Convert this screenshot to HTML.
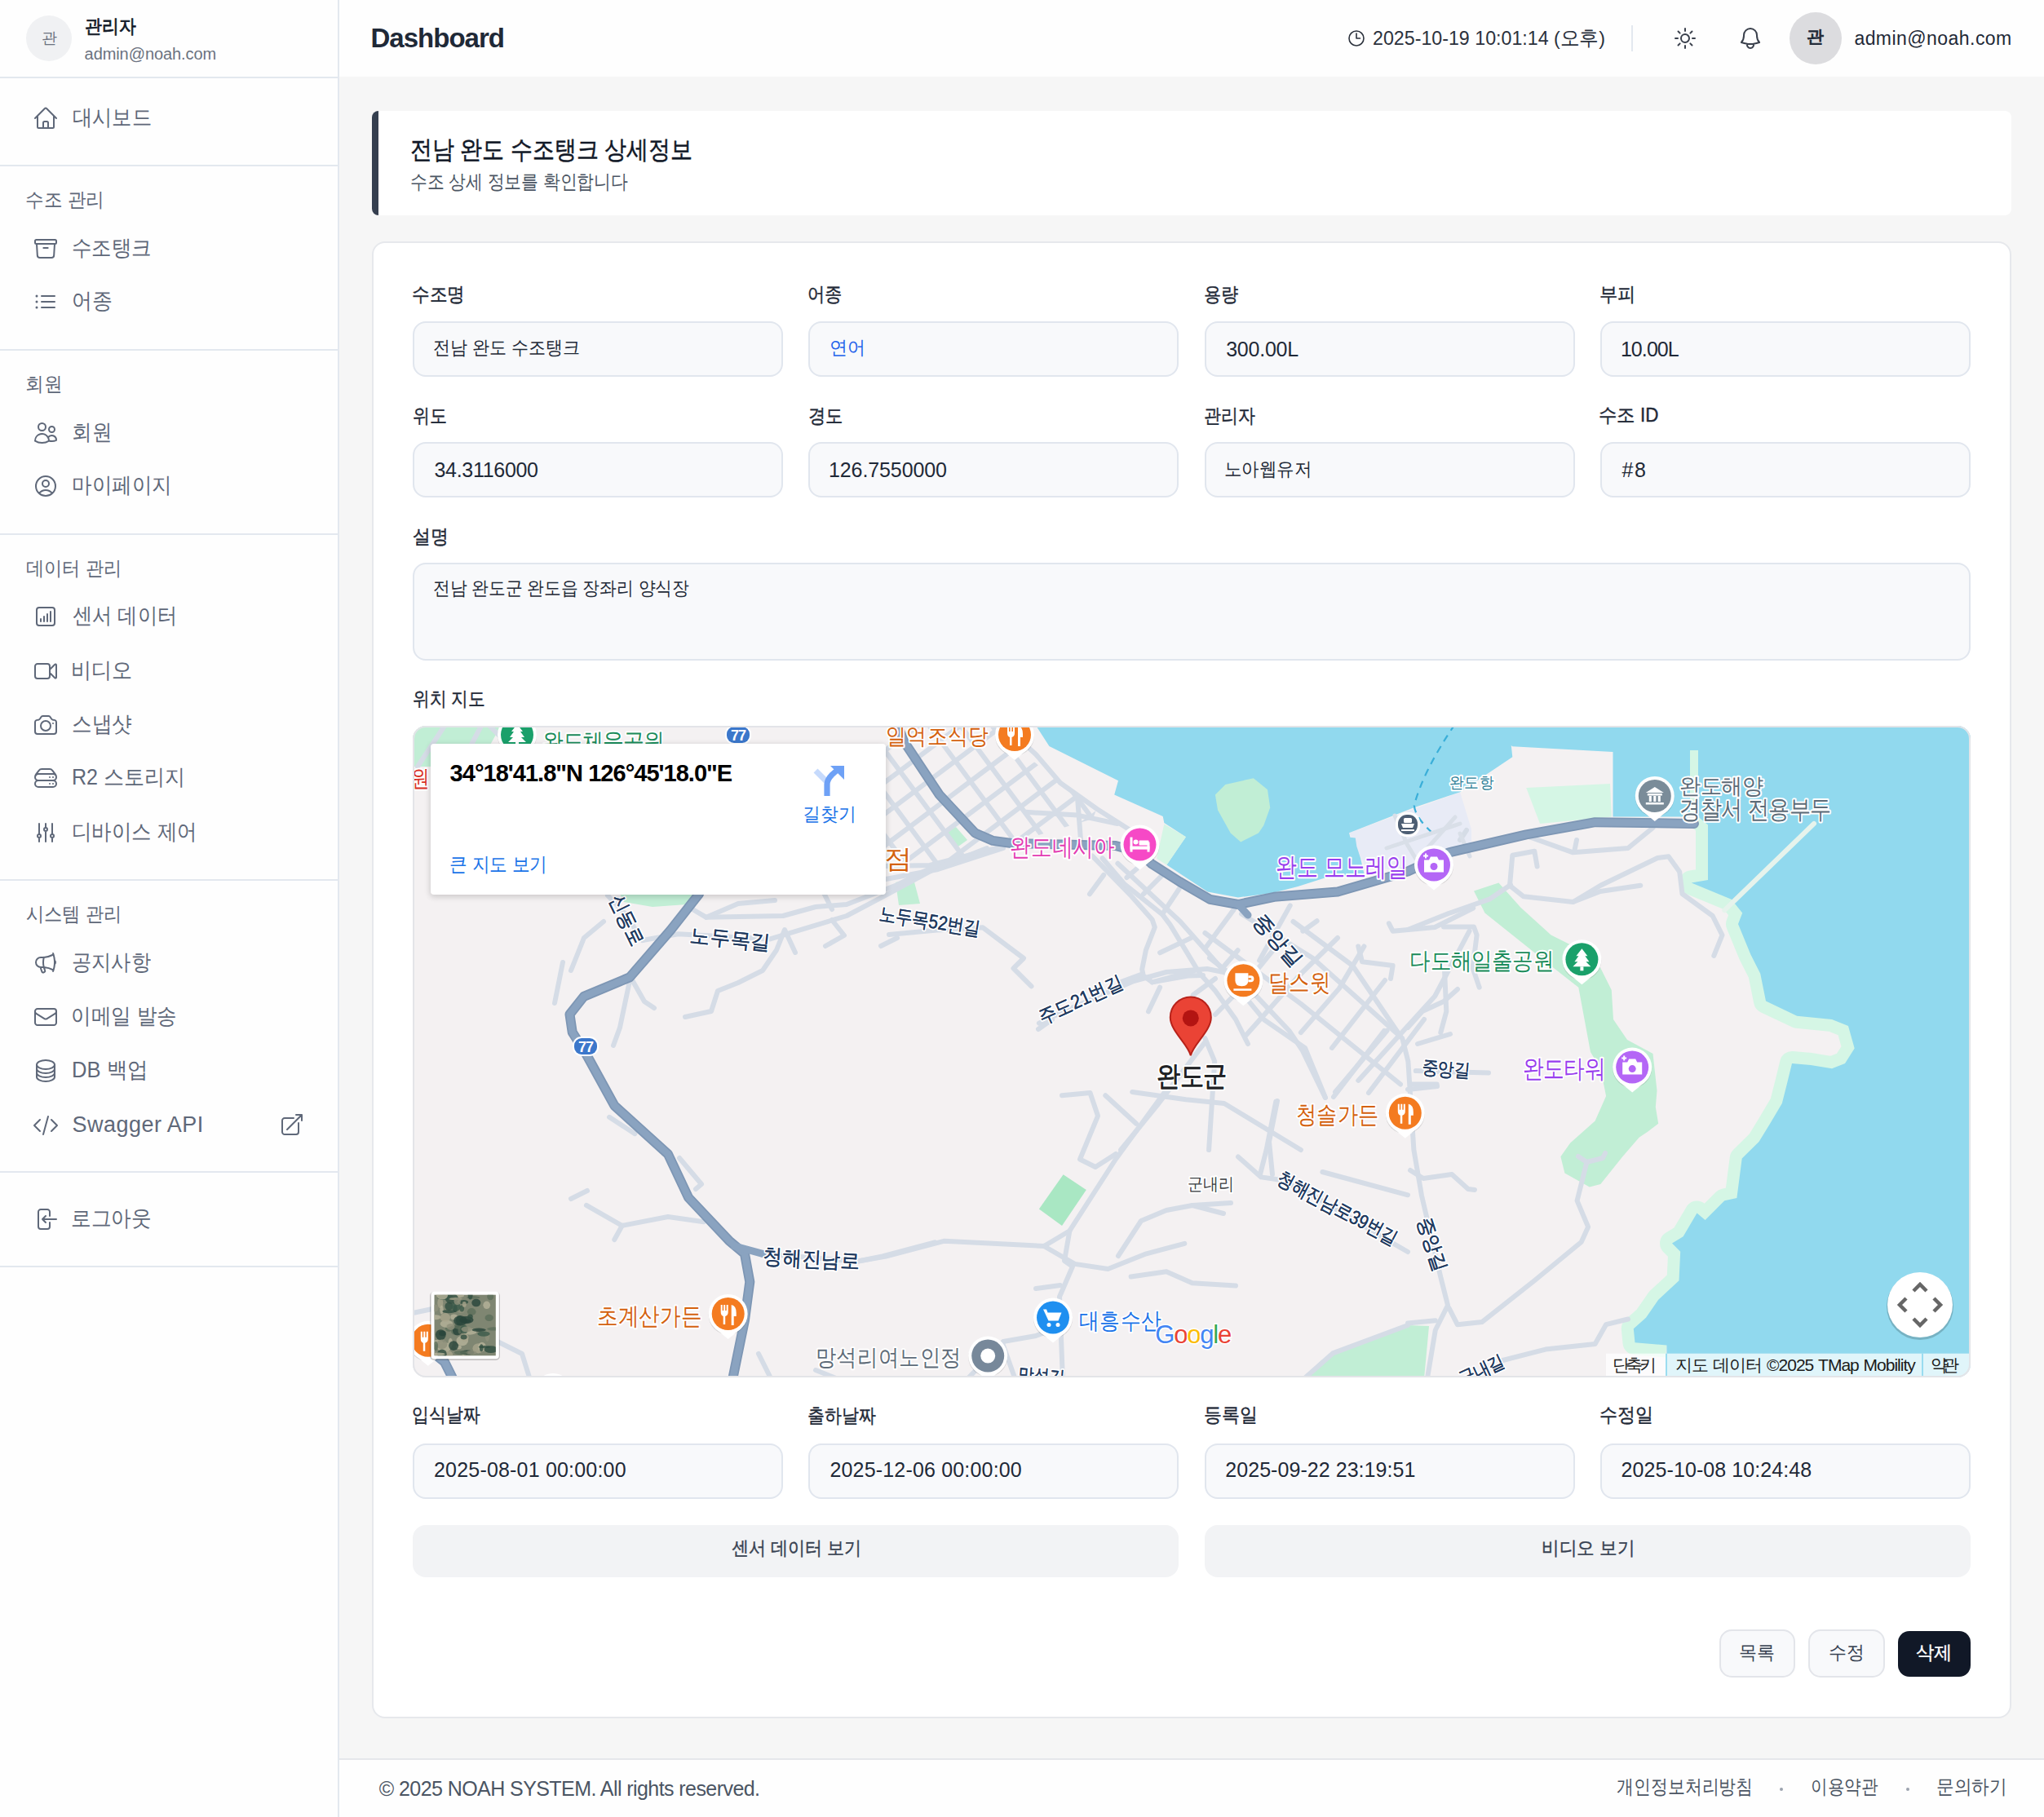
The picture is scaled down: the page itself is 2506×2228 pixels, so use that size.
<!DOCTYPE html>
<html><head><meta charset="utf-8">
<style>
*{box-sizing:border-box;margin:0;padding:0}
html,body{width:2506px;height:2228px;overflow:hidden;background:#f6f6f6;font-family:"Liberation Sans",sans-serif}
.box{position:absolute}
.ic{position:absolute;overflow:visible}
.t{position:absolute;white-space:nowrap;line-height:1}
</style></head><body>
<div class="box" style="left:0;top:0;width:414px;height:2228px;background:#fefefe"></div>
<div class="box" style="left:414px;top:0;width:2px;height:2228px;background:#e3e8ef"></div>
<div class="box" style="left:0;top:94px;width:414px;height:2px;background:#e3e8ef"></div>
<div class="box" style="left:0;top:202px;width:414px;height:2px;background:#e3e8ef"></div>
<div class="box" style="left:0;top:428px;width:414px;height:2px;background:#e3e8ef"></div>
<div class="box" style="left:0;top:654px;width:414px;height:2px;background:#e3e8ef"></div>
<div class="box" style="left:0;top:1078px;width:414px;height:2px;background:#e3e8ef"></div>
<div class="box" style="left:0;top:1436px;width:414px;height:2px;background:#e3e8ef"></div>
<div class="box" style="left:0;top:1552px;width:414px;height:2px;background:#e3e8ef"></div>
<div class="box" style="left:32px;top:19px;width:56px;height:56px;border-radius:50%;background:#f0f1f3"></div>
<svg class="ic" style="left:40px;top:129px" width="32" height="32" viewBox="0 0 24 24" fill="none" stroke="#5f6879" stroke-width="1.5" stroke-linecap="round" stroke-linejoin="round"><path d="M2.25 12l8.954-8.955c.44-.439 1.152-.439 1.591 0L21.75 12M4.5 9.75v10.125c0 .621.504 1.125 1.125 1.125H9.75v-4.875c0-.621.504-1.125 1.125-1.125h2.25c.621 0 1.125.504 1.125 1.125V21h4.125c.621 0 1.125-.504 1.125-1.125V9.75M8.25 21h8.25"/></svg>
<svg class="ic" style="left:40px;top:289.4px" width="32" height="32" viewBox="0 0 24 24" fill="none" stroke="#5f6879" stroke-width="1.5" stroke-linecap="round" stroke-linejoin="round"><path d="M20.25 7.5l-.625 10.632a2.25 2.25 0 01-2.247 2.118H6.622a2.25 2.25 0 01-2.247-2.118L3.75 7.5M10 11.25h4M3.375 7.5h17.25c.621 0 1.125-.504 1.125-1.125v-1.5c0-.621-.504-1.125-1.125-1.125H3.375c-.621 0-1.125.504-1.125 1.125v1.5c0 .621.504 1.125 1.125 1.125z"/></svg>
<svg class="ic" style="left:40px;top:354px" width="32" height="32" viewBox="0 0 24 24" fill="none" stroke="#5f6879" stroke-width="1.5" stroke-linecap="round" stroke-linejoin="round"><path d="M8.25 6.75h12M8.25 12h12m-12 5.25h12M3.75 6.75h.007v.008H3.75V6.75zm.375 0a.375.375 0 11-.75 0 .375.375 0 01.75 0zM3.75 12h.007v.008H3.75V12zm.375 0a.375.375 0 11-.75 0 .375.375 0 01.75 0zm-.375 5.25h.007v.008H3.75v-.008zm.375 0a.375.375 0 11-.75 0 .375.375 0 01.75 0z"/></svg>
<svg class="ic" style="left:40px;top:514.7px" width="32" height="32" viewBox="0 0 24 24" fill="none" stroke="#5f6879" stroke-width="1.5" stroke-linecap="round" stroke-linejoin="round"><path d="M15 19.128a9.38 9.38 0 002.625.372 9.337 9.337 0 004.121-.952 4.125 4.125 0 00-7.533-2.493M15 19.128v-.003c0-1.113-.285-2.16-.786-3.07M15 19.128v.106A12.318 12.318 0 018.624 21c-2.331 0-4.512-.645-6.374-1.766l-.001-.109a6.375 6.375 0 0111.964-3.07M12 6.375a3.375 3.375 0 11-6.75 0 3.375 3.375 0 016.75 0zm8.25 2.25a2.625 2.625 0 11-5.25 0 2.625 2.625 0 015.25 0z"/></svg>
<svg class="ic" style="left:40px;top:580.2px" width="32" height="32" viewBox="0 0 24 24" fill="none" stroke="#5f6879" stroke-width="1.5" stroke-linecap="round" stroke-linejoin="round"><path d="M17.982 18.725A7.488 7.488 0 0012 15.75a7.488 7.488 0 00-5.982 2.975m11.963 0a9 9 0 10-11.963 0m11.963 0A8.966 8.966 0 0112 21a8.966 8.966 0 01-5.982-2.275M15 9.75a3 3 0 11-6 0 3 3 0 016 0z"/></svg>
<svg class="ic" style="left:40px;top:740px" width="32" height="32" viewBox="0 0 24 24" fill="none" stroke="#5f6879" stroke-width="1.5" stroke-linecap="round" stroke-linejoin="round"><path d="M7.5 14.25v2.25m3-4.5v4.5m3-6.75v6.75m3-9v9M6 20.25h12A2.25 2.25 0 0020.25 18V6A2.25 2.25 0 0018 3.75H6A2.25 2.25 0 003.75 6v12A2.25 2.25 0 006 20.25z"/></svg>
<svg class="ic" style="left:40px;top:806.7px" width="32" height="32" viewBox="0 0 24 24" fill="none" stroke="#5f6879" stroke-width="1.5" stroke-linecap="round" stroke-linejoin="round"><path d="M15.75 10.5l4.72-4.72a.75.75 0 011.28.53v11.38a.75.75 0 01-1.28.53l-4.72-4.72M4.5 18.75h9a2.25 2.25 0 002.25-2.25v-9a2.25 2.25 0 00-2.25-2.25h-9A2.25 2.25 0 002.25 7.5v9a2.25 2.25 0 002.25 2.25z"/></svg>
<svg class="ic" style="left:40px;top:873px" width="32" height="32" viewBox="0 0 24 24" fill="none" stroke="#5f6879" stroke-width="1.5" stroke-linecap="round" stroke-linejoin="round"><path d="M6.827 6.175A2.31 2.31 0 015.186 7.23c-.38.054-.757.112-1.134.175C2.999 7.58 2.25 8.507 2.25 9.574V18a2.25 2.25 0 002.25 2.25h15A2.25 2.25 0 0021.75 18V9.574c0-1.067-.75-1.994-1.802-2.169a47.865 47.865 0 00-1.134-.175 2.31 2.31 0 01-1.64-1.055l-.822-1.316a2.192 2.192 0 00-1.736-1.039 48.774 48.774 0 00-5.232 0 2.192 2.192 0 00-1.736 1.039l-.821 1.316zM16.5 12.75a4.5 4.5 0 11-9 0 4.5 4.5 0 019 0zM18.75 10.5h.008v.008h-.008V10.5z"/></svg>
<svg class="ic" style="left:40px;top:938.2px" width="32" height="32" viewBox="0 0 24 24" fill="none" stroke="#5f6879" stroke-width="1.5" stroke-linecap="round" stroke-linejoin="round"><path d="M5.25 14.25h13.5m-13.5 0a3 3 0 01-3-3m3 3a3 3 0 100 6h13.5a3 3 0 100-6m-16.5-3a3 3 0 013-3h13.5a3 3 0 013 3m-19.5 0a4.5 4.5 0 01.9-2.7L5.737 5.1a3.375 3.375 0 012.7-1.35h7.126c1.062 0 2.062.5 2.7 1.35l2.587 3.45a4.5 4.5 0 01.9 2.7m0 0a3 3 0 01-3 3m0 3h.008v.008h-.008v-.008zm0-6h.008v.008h-.008v-.008zm-3 6h.008v.008h-.008v-.008zm0-6h.008v.008h-.008v-.008z"/></svg>
<svg class="ic" style="left:40px;top:1004.6px" width="32" height="32" viewBox="0 0 24 24" fill="none" stroke="#5f6879" stroke-width="1.5" stroke-linecap="round" stroke-linejoin="round"><path d="M6 13.5V3.75m0 9.75a1.5 1.5 0 010 3m0-3a1.5 1.5 0 000 3m0 3.75V16.5m12-3V3.75m0 9.75a1.5 1.5 0 010 3m0-3a1.5 1.5 0 000 3m0 3.75V16.5m-6-9V3.75m0 3.75a1.5 1.5 0 010 3m0-3a1.5 1.5 0 000 3m0 9.75V10.5"/></svg>
<svg class="ic" style="left:40px;top:1164.8px" width="32" height="32" viewBox="0 0 24 24" fill="none" stroke="#5f6879" stroke-width="1.5" stroke-linecap="round" stroke-linejoin="round"><path d="M10.34 15.84c-.688-.06-1.386-.09-2.09-.09H7.5a4.5 4.5 0 110-9h.75c.704 0 1.402-.03 2.09-.09m0 9.18c.253.962.584 1.892.985 2.783.247.55.06 1.21-.463 1.511l-.657.38c-.551.318-1.26.117-1.527-.461a20.845 20.845 0 01-1.44-4.282m3.102.069a18.03 18.03 0 01-.59-4.59c0-1.586.205-3.124.59-4.59m0 9.18a23.848 23.848 0 018.835 2.535M10.34 6.66a23.847 23.847 0 008.835-2.535m0 0A23.74 23.74 0 0018.795 3m.38 1.125a23.91 23.91 0 011.014 5.395m-1.014 8.855c-.118.38-.245.754-.38 1.125m.38-1.125a23.91 23.91 0 001.014-5.395m0-3.46c.495.413.811 1.035.811 1.73 0 .695-.316 1.317-.811 1.73m0-3.46a24.347 24.347 0 010 3.46"/></svg>
<svg class="ic" style="left:40px;top:1230.7px" width="32" height="32" viewBox="0 0 24 24" fill="none" stroke="#5f6879" stroke-width="1.5" stroke-linecap="round" stroke-linejoin="round"><path d="M21.75 6.75v10.5a2.25 2.25 0 01-2.25 2.25h-15a2.25 2.25 0 01-2.25-2.25V6.75m19.5 0A2.25 2.25 0 0019.5 4.5h-15a2.25 2.25 0 00-2.25 2.25m19.5 0v.243a2.25 2.25 0 01-1.07 1.916l-7.5 4.615a2.25 2.25 0 01-2.36 0L3.32 8.91a2.25 2.25 0 01-1.07-1.916V6.75"/></svg>
<svg class="ic" style="left:40px;top:1296.8px" width="32" height="32" viewBox="0 0 24 24" fill="none" stroke="#5f6879" stroke-width="1.5" stroke-linecap="round" stroke-linejoin="round"><path d="M20.25 6.375c0 2.278-3.694 4.125-8.25 4.125S3.75 8.653 3.75 6.375m16.5 0c0-2.278-3.694-4.125-8.25-4.125S3.75 4.097 3.75 6.375m16.5 0v11.25c0 2.278-3.694 4.125-8.25 4.125s-8.25-1.847-8.25-4.125V6.375m16.5 0v3.75m-16.5-3.75v3.75m16.5 0v3.75C20.25 16.153 16.556 18 12 18s-8.25-1.847-8.25-4.125v-3.75m16.5 0c0 2.278-3.694 4.125-8.25 4.125s-8.25-1.847-8.25-4.125"/></svg>
<svg class="ic" style="left:40px;top:1364px" width="32" height="32" viewBox="0 0 24 24" fill="none" stroke="#5f6879" stroke-width="1.5" stroke-linecap="round" stroke-linejoin="round"><path d="M17.25 6.75L22.5 12l-5.25 5.25m-10.5 0L1.5 12l5.25-5.25m7.5-3l-4.5 16.5"/></svg>
<svg class="ic" style="left:40px;top:1479px" width="32" height="32" viewBox="0 0 24 24" fill="none" stroke="#5f6879" stroke-width="1.5" stroke-linecap="round" stroke-linejoin="round"><path d="M15.75 9V5.25A2.25 2.25 0 0013.5 3h-6a2.25 2.25 0 00-2.25 2.25v13.5A2.25 2.25 0 007.5 21h6a2.25 2.25 0 002.25-2.25V15M12 9l-3 3m0 0l3 3m-3-3h12.75"/></svg>
<svg class="ic" style="left:342px;top:1363px" width="32" height="32" viewBox="0 0 24 24" fill="none" stroke="#5f6879" stroke-width="1.5" stroke-linecap="round" stroke-linejoin="round"><path d="M13.5 6H5.25A2.25 2.25 0 003 8.25v10.5A2.25 2.25 0 005.25 21h10.5A2.25 2.25 0 0018 18.75V10.5m-10.5 6L21 3m0 0h-5.25M21 3v5.25"/></svg>
<div class="box" style="left:416px;top:0;width:2090px;height:94px;background:#fefefe"></div>
<svg class="ic" style="left:1651px;top:35.3px" width="24" height="24" viewBox="0 0 24 24" fill="none" stroke="#2b313c" stroke-width="1.6" stroke-linecap="round" stroke-linejoin="round"><path d="M12 6v6h4.5m4.5 0a9 9 0 11-18 0 9 9 0 0118 0z"/></svg>
<div class="box" style="left:2000px;top:31px;width:2px;height:32px;background:#e3e8ef"></div>
<svg class="ic" style="left:2050px;top:31px" width="32" height="32" viewBox="0 0 24 24" fill="none" stroke="#3a404c" stroke-width="1.5" stroke-linecap="round" stroke-linejoin="round"><path d="M12 3v2.25m6.364.386l-1.591 1.591M21 12h-2.25m-.386 6.364l-1.591-1.591M12 18.75V21m-4.773-4.227l-1.591 1.591M5.25 12H3m4.227-4.773L5.636 5.636M15.75 12a3.75 3.75 0 11-7.5 0 3.75 3.75 0 017.5 0z"/></svg>
<svg class="ic" style="left:2130px;top:31px" width="32" height="32" viewBox="0 0 24 24" fill="none" stroke="#3a404c" stroke-width="1.5" stroke-linecap="round" stroke-linejoin="round"><path d="M14.857 17.082a23.848 23.848 0 005.454-1.31A8.967 8.967 0 0118 9.75v-.7V9A6 6 0 006 9v.75a8.967 8.967 0 01-2.312 6.022c1.733.64 3.56 1.085 5.455 1.31m5.714 0a24.255 24.255 0 01-5.714 0m5.714 0a3 3 0 11-5.714 0"/></svg>
<div class="box" style="left:2194px;top:15px;width:64px;height:64px;border-radius:50%;background:#dcdcdf"></div>
<div class="box" style="left:456px;top:136px;width:2010px;height:128px;background:#fff;border-radius:8px;border-left:8px solid #353f4f"></div>
<div class="box" style="left:456px;top:296px;width:2010px;height:1811px;background:#fff;border:2px solid #e6e8ec;border-radius:16px"></div>
<div class="box" style="left:505.8px;top:394.2px;width:454px;height:68px;background:#f8f9fb;border:2px solid #e1e6ee;border-radius:16px"></div>
<div class="box" style="left:505.8px;top:542.2px;width:454px;height:68px;background:#f8f9fb;border:2px solid #e1e6ee;border-radius:16px"></div>
<div class="box" style="left:505.8px;top:1770.2px;width:454px;height:68px;background:#f8f9fb;border:2px solid #e1e6ee;border-radius:16px"></div>
<div class="box" style="left:991.2px;top:394.2px;width:454px;height:68px;background:#f8f9fb;border:2px solid #e1e6ee;border-radius:16px"></div>
<div class="box" style="left:991.2px;top:542.2px;width:454px;height:68px;background:#f8f9fb;border:2px solid #e1e6ee;border-radius:16px"></div>
<div class="box" style="left:991.2px;top:1770.2px;width:454px;height:68px;background:#f8f9fb;border:2px solid #e1e6ee;border-radius:16px"></div>
<div class="box" style="left:1476.6px;top:394.2px;width:454px;height:68px;background:#f8f9fb;border:2px solid #e1e6ee;border-radius:16px"></div>
<div class="box" style="left:1476.6px;top:542.2px;width:454px;height:68px;background:#f8f9fb;border:2px solid #e1e6ee;border-radius:16px"></div>
<div class="box" style="left:1476.6px;top:1770.2px;width:454px;height:68px;background:#f8f9fb;border:2px solid #e1e6ee;border-radius:16px"></div>
<div class="box" style="left:1962.0px;top:394.2px;width:454px;height:68px;background:#f8f9fb;border:2px solid #e1e6ee;border-radius:16px"></div>
<div class="box" style="left:1962.0px;top:542.2px;width:454px;height:68px;background:#f8f9fb;border:2px solid #e1e6ee;border-radius:16px"></div>
<div class="box" style="left:1962.0px;top:1770.2px;width:454px;height:68px;background:#f8f9fb;border:2px solid #e1e6ee;border-radius:16px"></div>
<div class="box" style="left:505.8px;top:689.6px;width:1910.4px;height:120px;background:#f8f9fb;border:2px solid #e1e6ee;border-radius:16px"></div>
<div class="box" style="left:506px;top:1870px;width:939px;height:64.4px;background:#f2f3f5;border-radius:16px"></div>
<div class="box" style="left:1477.3px;top:1870px;width:938.4px;height:64.4px;background:#f2f3f5;border-radius:16px"></div>
<div class="box" style="left:2108.3px;top:1998.3px;width:92.3px;height:59px;background:#f8f9fb;border:2px solid #e3e5ea;border-radius:15px"></div>
<div class="box" style="left:2217.2px;top:1998.3px;width:93.5px;height:59px;background:#f8f9fb;border:2px solid #e3e5ea;border-radius:15px"></div>
<div class="box" style="left:2327px;top:2000px;width:89px;height:55.7px;background:#111827;border-radius:14px"></div>
<div class="box" style="left:416px;top:2156px;width:2090px;height:72px;background:#fefefe;border-top:2px solid #e5e7eb"></div>
<div class="box" style="left:2182px;top:2191.5px;width:4px;height:4px;border-radius:50%;background:#9ca3af"></div>
<div class="box" style="left:2337px;top:2191.5px;width:4px;height:4px;border-radius:50%;background:#9ca3af"></div>
<div class="box" style="left:506px;top:890px;width:1910px;height:799px;border-radius:16px;overflow:hidden;background:#f3f1f2"><svg width="1910" height="799" viewBox="506 890 1910 799" style="position:absolute;left:0;top:0" font-family="&quot;Liberation Sans&quot;, sans-serif">
<rect x="506" y="890" width="1910" height="799" fill="#f4f1f2"/>
<polygon points="506.0,890.0 614.0,890.0 600.0,915.0 560.0,930.0 528.0,940.0 506.0,940.0" fill="#c1eed5"/>
<polygon points="760.0,1096.0 852.0,1096.0 856.0,1108.0 800.0,1112.0 765.0,1106.0" fill="#c1eed5"/>
<polygon points="1871.2,966.0 1974.0,961.0 1975.8,1001.4 1888.0,1009.9" fill="#d5f6e5"/>
<polygon points="1807.0,1092.6 1837.4,1082.4 1864.4,1112.8 1901.6,1146.6 1928.6,1160.0 1962.3,1187.0 1975.8,1214.0 1978.0,1250.0 1995.0,1275.0 2026.5,1292.0 2031.5,1337.3 2029.8,1357.5 2033.2,1377.8 2019.7,1388.0 2009.6,1394.7 1989.3,1418.3 1962.3,1452.0 1948.8,1455.4 1918.4,1438.5 1913.4,1418.3 1925.2,1401.4 1955.6,1374.4 1969.1,1344.0 1962.3,1310.3 1950.0,1290.0 1935.3,1210.7 1905.0,1187.0 1854.3,1146.6 1820.5,1119.6" fill="#c1eed5"/>
<polygon points="1303.6,1440.3 1331.8,1459.0 1302.0,1502.9 1273.9,1482.5" fill="#a9e7c3"/>
<polygon points="1599.5,1690.0 1620.0,1668.0 1660.0,1650.0 1726.0,1625.0 1752.0,1626.0 1746.0,1690.0" fill="#c1eed5"/>
<polygon points="1158.0,1021.0 1172.0,1014.0 1186.0,1030.0 1172.0,1040.0" fill="#c1eed5"/>
<polygon points="1098.0,1082.0 1120.0,1078.0 1128.0,1108.0 1102.0,1110.0" fill="#c1eed5"/>
<polygon points="1654.0,1021.3 1790.1,971.2 1804.0,1017.0 1804.0,1037.0 1732.0,1072.0 1672.7,1060.0" fill="#e8ebf6"/>
<polyline points="2082.0,1001.4 2094.0,1011.5 2094.0,1079.0 2073.7,1082.4 2122.7,1102.7 2136.2,1119.6 2131.0,1133.0 2146.3,1170.2 2158.2,1193.8 2165.0,1227.6 2203.2,1245.8 2246.0,1250.0 2266.0,1258.0 2273.7,1285.6 2262.0,1304.0 2246.0,1310.2 2220.0,1306.0 2197.0,1304.0 2191.0,1328.5 2184.8,1353.0 2170.0,1378.0 2156.5,1400.0 2135.7,1420.5 2129.4,1469.0 2114.3,1472.3 2090.6,1496.0 2080.5,1487.5 2063.6,1516.2 2050.0,1524.6 2060.2,1534.8 2058.5,1570.2 2033.2,1593.8 2018.0,1615.8 2002.8,1629.3 2004.5,1646.2 2043.4,1649.6" fill="none" stroke="#d5f6e5" stroke-width="30" stroke-linejoin="round"/>
<polygon points="1269.0,888.0 1286.4,915.0 1371.0,957.3 1366.2,974.5 1425.7,1001.0 1427.3,1009.0 1453.9,1026.2 1430.4,1060.6 1480.5,1093.5 1518.0,1100.4 1560.0,1095.0 1591.3,1087.0 1622.6,1077.0 1672.7,1072.2 1668.0,1051.9 1663.3,1037.8 1661.8,1027.6 1655.5,1026.8 1654.0,1021.3 1732.2,990.8 1790.1,971.2 1854.3,928.2 1852.8,914.0 1854.3,915.3 1977.5,922.0 1977.5,1001.4 2072.0,1001.4 2072.0,920.0 2082.0,920.0 2082.0,1001.4 2094.0,1011.5 2094.0,1079.0 2073.7,1082.4 2122.7,1102.7 2136.2,1119.6 2131.0,1133.0 2146.3,1170.2 2158.2,1193.8 2165.0,1227.6 2203.2,1245.8 2246.0,1250.0 2266.0,1258.0 2273.7,1285.6 2262.0,1304.0 2246.0,1310.2 2220.0,1306.0 2197.0,1304.0 2191.0,1328.5 2184.8,1353.0 2170.0,1378.0 2156.5,1400.0 2135.7,1420.5 2129.4,1469.0 2114.3,1472.3 2090.6,1496.0 2080.5,1487.5 2063.6,1516.2 2050.0,1524.6 2060.2,1534.8 2058.5,1570.2 2033.2,1593.8 2018.0,1615.8 2002.8,1629.3 2004.5,1646.2 2043.4,1649.6 2043.4,1692.0 2418.0,1692.0 2418.0,888.0" fill="#91d9ee"/>
<polygon points="1489.9,974.5 1502.4,962.0 1536.8,954.2 1554.0,968.3 1557.2,990.2 1549.4,1012.0 1543.0,1021.5 1521.2,1032.5 1508.7,1021.5 1493.0,993.3" fill="#c1eed5"/>
<polygon points="1427.3,1010.5 1453.9,1026.2 1430.4,1060.6 1418.0,1052.8" fill="#d5f6e5"/>
<line x1="2114.3" y1="1116.2" x2="2224" y2="1009.9" stroke="#e6f3ec" stroke-width="6" stroke-linecap="round"/>
<polygon points="2072.0,920.0 2082.0,920.0 2082.0,1001.4 2072.0,1001.4" fill="#d5f6e5"/>
<path d="M1783.9,888 Q1745,945 1733.8,987.7 Q1735,1003 1758.8,1023.7" fill="none" stroke="#3aaed8" stroke-width="2.2" stroke-dasharray="9,7"/>
<polyline points="512.0,940.0 545.0,890.0" fill="none" stroke="#d5dce6" stroke-width="6" stroke-linecap="round" stroke-linejoin="round"/>
<polyline points="540.0,985.0 590.0,890.0" fill="none" stroke="#d5dce6" stroke-width="6" stroke-linecap="round" stroke-linejoin="round"/>
<polyline points="600.0,890.0 640.0,930.0" fill="none" stroke="#d5dce6" stroke-width="6" stroke-linecap="round" stroke-linejoin="round"/>
<polyline points="1248.0,905.0 1270.0,925.0 1300.0,960.0 1345.0,992.0 1392.0,1022.0" fill="none" stroke="#d5dce6" stroke-width="6" stroke-linecap="round" stroke-linejoin="round"/>
<polyline points="1258.0,995.8 1321.0,999.6 1370.0,1010.0" fill="none" stroke="#d5dce6" stroke-width="6" stroke-linecap="round" stroke-linejoin="round"/>
<polyline points="1321.0,978.0 1325.0,1030.0" fill="none" stroke="#d5dce6" stroke-width="6" stroke-linecap="round" stroke-linejoin="round"/>
<polyline points="1086.0,1062.0 1140.0,1061.0 1218.0,1041.0 1240.0,1034.0" fill="none" stroke="#d5dce6" stroke-width="6" stroke-linecap="round" stroke-linejoin="round"/>
<polyline points="1086.0,1078.0 1150.0,1066.0 1230.0,1040.0" fill="none" stroke="#d5dce6" stroke-width="6" stroke-linecap="round" stroke-linejoin="round"/>
<polyline points="787.8,1153.0 831.6,1145.2 944.3,1151.4 1038.0,1123.0 1088.0,1096.6 1146.0,1065.3 1210.0,1040.0" fill="none" stroke="#d5dce6" stroke-width="6" stroke-linecap="round" stroke-linejoin="round"/>
<polyline points="844.0,1112.0 866.0,1124.8 960.0,1123.0 1000.0,1112.0 1038.0,1109.0 1100.0,1085.0 1150.0,1060.0" fill="none" stroke="#d5dce6" stroke-width="6" stroke-linecap="round" stroke-linejoin="round"/>
<polyline points="866.0,1124.8 905.0,1108.0 950.0,1104.0" fill="none" stroke="#d5dce6" stroke-width="6" stroke-linecap="round" stroke-linejoin="round"/>
<polyline points="1010.0,1095.0 1020.0,1115.0" fill="none" stroke="#d5dce6" stroke-width="6" stroke-linecap="round" stroke-linejoin="round"/>
<polyline points="773.0,1198.0 760.0,1260.0 752.0,1282.0" fill="none" stroke="#d5dce6" stroke-width="6" stroke-linecap="round" stroke-linejoin="round"/>
<polyline points="773.0,1198.0 790.0,1228.0 802.0,1236.0" fill="none" stroke="#d5dce6" stroke-width="6" stroke-linecap="round" stroke-linejoin="round"/>
<polyline points="840.0,1247.0 872.0,1240.0 880.0,1215.0 905.0,1205.0 935.0,1190.0 952.0,1165.0 962.0,1140.0 975.0,1168.0" fill="none" stroke="#d5dce6" stroke-width="6" stroke-linecap="round" stroke-linejoin="round"/>
<polyline points="1020.0,1128.0 1035.0,1147.0 1012.0,1160.0" fill="none" stroke="#d5dce6" stroke-width="6" stroke-linecap="round" stroke-linejoin="round"/>
<polyline points="787.8,1153.0 766.0,1120.0 745.0,1098.0" fill="none" stroke="#d5dce6" stroke-width="6" stroke-linecap="round" stroke-linejoin="round"/>
<polyline points="700.0,1190.0 716.0,1150.0 740.0,1130.0" fill="none" stroke="#d5dce6" stroke-width="6" stroke-linecap="round" stroke-linejoin="round"/>
<polyline points="680.0,1230.0 690.0,1180.0" fill="none" stroke="#d5dce6" stroke-width="6" stroke-linecap="round" stroke-linejoin="round"/>
<polyline points="1090.0,1146.0 1148.6,1140.5 1205.0,1137.3 1255.0,1175.0 1242.5,1187.4 1264.5,1209.3" fill="none" stroke="#d5dce6" stroke-width="6" stroke-linecap="round" stroke-linejoin="round"/>
<polyline points="1080.0,1160.0 1100.0,1150.0" fill="none" stroke="#d5dce6" stroke-width="6" stroke-linecap="round" stroke-linejoin="round"/>
<polyline points="1273.9,1254.7 1300.0,1242.0 1390.0,1203.0 1430.0,1192.0 1480.0,1188.0 1500.0,1192.0" fill="none" stroke="#d5dce6" stroke-width="6" stroke-linecap="round" stroke-linejoin="round"/>
<polyline points="1273.0,1262.0 1290.0,1250.0" fill="none" stroke="#d5dce6" stroke-width="6" stroke-linecap="round" stroke-linejoin="round"/>
<polyline points="1339.0,1049.4 1387.7,1099.5 1412.7,1127.7 1415.8,1137.0 1404.9,1165.2 1400.2,1188.7 1401.8,1196.5 1412.7,1204.4 1456.5,1196.5 1475.0,1196.0" fill="none" stroke="#d5dce6" stroke-width="6" stroke-linecap="round" stroke-linejoin="round"/>
<polyline points="1351.6,1052.5 1378.3,1083.8 1425.2,1121.4 1434.6,1133.9 1465.9,1185.6 1472.2,1195.0 1490.0,1215.0 1515.0,1250.0 1530.0,1280.0" fill="none" stroke="#d5dce6" stroke-width="6" stroke-linecap="round" stroke-linejoin="round"/>
<polyline points="1370.4,1058.8 1447.0,1130.0 1476.9,1163.7 1500.0,1190.0 1549.6,1250.2 1600.0,1285.0 1625.0,1346.0" fill="none" stroke="#d5dce6" stroke-width="6" stroke-linecap="round" stroke-linejoin="round"/>
<polyline points="1483.0,1174.6 1531.6,1212.1 1580.9,1264.3 1596.6,1287.8 1624.7,1345.7" fill="none" stroke="#d5dce6" stroke-width="6" stroke-linecap="round" stroke-linejoin="round"/>
<polyline points="1381.4,1076.0 1393.9,1065.0" fill="none" stroke="#d5dce6" stroke-width="6" stroke-linecap="round" stroke-linejoin="round"/>
<polyline points="1401.8,1096.3 1423.7,1074.4" fill="none" stroke="#d5dce6" stroke-width="6" stroke-linecap="round" stroke-linejoin="round"/>
<polyline points="1426.8,1118.3 1445.6,1090.0" fill="none" stroke="#d5dce6" stroke-width="6" stroke-linecap="round" stroke-linejoin="round"/>
<polyline points="1476.9,1163.7 1512.8,1115.1" fill="none" stroke="#d5dce6" stroke-width="6" stroke-linecap="round" stroke-linejoin="round"/>
<polyline points="1497.2,1188.7 1517.6,1165.2" fill="none" stroke="#d5dce6" stroke-width="6" stroke-linecap="round" stroke-linejoin="round"/>
<polyline points="1544.1,1177.7 1581.7,1110.4" fill="none" stroke="#d5dce6" stroke-width="6" stroke-linecap="round" stroke-linejoin="round"/>
<polyline points="1597.3,1141.7 1614.6,1129.2" fill="none" stroke="#d5dce6" stroke-width="6" stroke-linecap="round" stroke-linejoin="round"/>
<polyline points="1336.0,1096.3 1353.2,1072.9" fill="none" stroke="#d5dce6" stroke-width="6" stroke-linecap="round" stroke-linejoin="round"/>
<polyline points="1422.1,1168.3 1461.2,1149.6" fill="none" stroke="#d5dce6" stroke-width="6" stroke-linecap="round" stroke-linejoin="round"/>
<polyline points="1373.6,1204.4 1398.6,1195.0" fill="none" stroke="#d5dce6" stroke-width="6" stroke-linecap="round" stroke-linejoin="round"/>
<polyline points="1412.7,1204.4 1464.3,1190.3" fill="none" stroke="#d5dce6" stroke-width="6" stroke-linecap="round" stroke-linejoin="round"/>
<polyline points="1408.0,1240.3 1422.1,1210.6" fill="none" stroke="#d5dce6" stroke-width="6" stroke-linecap="round" stroke-linejoin="round"/>
<polyline points="1462.8,1220.0 1490.0,1200.0" fill="none" stroke="#d5dce6" stroke-width="6" stroke-linecap="round" stroke-linejoin="round"/>
<polyline points="1490.0,1244.0 1530.0,1203.0 1565.0,1160.0" fill="none" stroke="#d5dce6" stroke-width="6" stroke-linecap="round" stroke-linejoin="round"/>
<polyline points="1528.0,1269.0 1593.0,1196.0 1640.0,1150.0" fill="none" stroke="#d5dce6" stroke-width="6" stroke-linecap="round" stroke-linejoin="round"/>
<polyline points="1633.0,1285.0 1698.0,1202.0" fill="none" stroke="#d5dce6" stroke-width="6" stroke-linecap="round" stroke-linejoin="round"/>
<polyline points="1635.0,1345.0 1697.0,1264.0" fill="none" stroke="#d5dce6" stroke-width="6" stroke-linecap="round" stroke-linejoin="round"/>
<polyline points="1678.0,1340.0 1746.0,1250.0" fill="none" stroke="#d5dce6" stroke-width="6" stroke-linecap="round" stroke-linejoin="round"/>
<polyline points="1477.4,1144.0 1594.9,1230.9 1717.0,1329.5" fill="none" stroke="#d5dce6" stroke-width="6" stroke-linecap="round" stroke-linejoin="round"/>
<polyline points="1522.0,1120.5 1609.0,1174.5 1719.3,1273.2 1726.4,1301.4 1733.4,1410.0 1742.9,1465.6 1766.5,1566.8 1775.0,1600.6 1759.8,1631.0 1749.6,1692.0" fill="none" stroke="#d5dce6" stroke-width="6" stroke-linecap="round" stroke-linejoin="round"/>
<polyline points="1585.5,1130.0 1658.3,1184.0 1717.0,1270.8" fill="none" stroke="#d5dce6" stroke-width="6" stroke-linecap="round" stroke-linejoin="round"/>
<polyline points="1594.9,1266.1 1641.8,1212.1 1672.4,1160.5" fill="none" stroke="#d5dce6" stroke-width="6" stroke-linecap="round" stroke-linejoin="round"/>
<polyline points="1637.1,1339.0 1700.5,1263.8" fill="none" stroke="#d5dce6" stroke-width="6" stroke-linecap="round" stroke-linejoin="round"/>
<polyline points="1665.3,1324.9 1759.2,1221.5 1801.5,1141.7" fill="none" stroke="#d5dce6" stroke-width="6" stroke-linecap="round" stroke-linejoin="round"/>
<polyline points="1477.4,1273.2 1489.2,1301.4 1482.1,1410.0" fill="none" stroke="#d5dce6" stroke-width="6" stroke-linecap="round" stroke-linejoin="round"/>
<polyline points="1388.2,1339.0 1454.0,1348.3 1500.9,1353.0 1594.9,1410.0" fill="none" stroke="#d5dce6" stroke-width="6" stroke-linecap="round" stroke-linejoin="round"/>
<polyline points="1374.1,1410.0 1418.7,1355.4 1477.4,1277.9" fill="none" stroke="#d5dce6" stroke-width="6" stroke-linecap="round" stroke-linejoin="round"/>
<polyline points="1564.3,1350.7 1552.6,1410.0 1545.0,1440.0" fill="none" stroke="#d5dce6" stroke-width="6" stroke-linecap="round" stroke-linejoin="round"/>
<polyline points="1702.9,1132.3 1707.6,1141.7 1759.2,1137.0 1806.2,1113.5" fill="none" stroke="#d5dce6" stroke-width="6" stroke-linecap="round" stroke-linejoin="round"/>
<polyline points="1771.0,1188.6 1773.3,1240.3 1766.3,1266.1" fill="none" stroke="#d5dce6" stroke-width="6" stroke-linecap="round" stroke-linejoin="round"/>
<polyline points="1665.3,1160.5 1670.0,1179.2 1707.6,1184.0 1705.0,1200.0" fill="none" stroke="#d5dce6" stroke-width="6" stroke-linecap="round" stroke-linejoin="round"/>
<polyline points="1735.8,1313.1 1825.0,1315.5" fill="none" stroke="#d5dce6" stroke-width="6" stroke-linecap="round" stroke-linejoin="round"/>
<polyline points="1731.0,1329.5 1761.6,1329.5" fill="none" stroke="#d5dce6" stroke-width="6" stroke-linecap="round" stroke-linejoin="round"/>
<polyline points="1726.0,1260.0 1744.0,1240.0 1770.0,1228.0 1787.0,1213.0" fill="none" stroke="#d5dce6" stroke-width="6" stroke-linecap="round" stroke-linejoin="round"/>
<polyline points="1427.3,1340.0 1367.8,1421.5 1311.4,1509.2 1280.0,1528.0 1158.0,1521.7 1086.0,1540.5 1050.8,1546.7 935.0,1537.3" fill="none" stroke="#d5dce6" stroke-width="6" stroke-linecap="round" stroke-linejoin="round"/>
<polyline points="1280.0,1528.0 1317.7,1549.9 1358.4,1556.0 1405.4,1537.3 1452.3,1524.8" fill="none" stroke="#d5dce6" stroke-width="6" stroke-linecap="round" stroke-linejoin="round"/>
<polyline points="1311.4,1509.2 1305.0,1546.0 1315.0,1553.0 1299.0,1590.0 1303.0,1692.0" fill="none" stroke="#d5dce6" stroke-width="6" stroke-linecap="round" stroke-linejoin="round"/>
<polyline points="1371.0,1540.0 1399.0,1497.0 1430.0,1484.0 1462.0,1478.0 1509.0,1475.0" fill="none" stroke="#d5dce6" stroke-width="6" stroke-linecap="round" stroke-linejoin="round"/>
<polyline points="1462.0,1478.0 1500.0,1488.0" fill="none" stroke="#d5dce6" stroke-width="6" stroke-linecap="round" stroke-linejoin="round"/>
<polyline points="1386.6,1565.5 1430.0,1559.3 1461.7,1573.3 1515.0,1576.5" fill="none" stroke="#d5dce6" stroke-width="6" stroke-linecap="round" stroke-linejoin="round"/>
<polyline points="1302.0,1343.2 1336.5,1340.0 1346.0,1368.3 1324.0,1421.5 1343.0,1431.0 1368.0,1415.0" fill="none" stroke="#d5dce6" stroke-width="6" stroke-linecap="round" stroke-linejoin="round"/>
<polyline points="1355.3,1343.2 1393.0,1377.7" fill="none" stroke="#d5dce6" stroke-width="6" stroke-linecap="round" stroke-linejoin="round"/>
<polyline points="1518.0,1418.4 1546.2,1443.4 1568.0,1446.5 1600.0,1460.0 1700.0,1520.0 1726.0,1535.0" fill="none" stroke="#d5dce6" stroke-width="6" stroke-linecap="round" stroke-linejoin="round"/>
<polyline points="1566.0,1350.0 1556.0,1400.0 1560.0,1440.0" fill="none" stroke="#d5dce6" stroke-width="6" stroke-linecap="round" stroke-linejoin="round"/>
<polyline points="1621.4,1437.0 1726.0,1465.3" fill="none" stroke="#d5dce6" stroke-width="6" stroke-linecap="round" stroke-linejoin="round"/>
<polyline points="1599.5,1690.0 1634.0,1659.4 1726.0,1625.0" fill="none" stroke="#d5dce6" stroke-width="6" stroke-linecap="round" stroke-linejoin="round"/>
<polyline points="1185.0,1692.0 1230.0,1645.0 1270.0,1638.0 1291.0,1630.0" fill="none" stroke="#d5dce6" stroke-width="6" stroke-linecap="round" stroke-linejoin="round"/>
<polyline points="1229.0,1647.0 1245.0,1692.0" fill="none" stroke="#d5dce6" stroke-width="6" stroke-linecap="round" stroke-linejoin="round"/>
<polyline points="1270.0,1580.0 1300.0,1576.0" fill="none" stroke="#d5dce6" stroke-width="6" stroke-linecap="round" stroke-linejoin="round"/>
<polyline points="747.0,1369.8 778.4,1390.2" fill="none" stroke="#d5dce6" stroke-width="6" stroke-linecap="round" stroke-linejoin="round"/>
<polyline points="833.0,1420.0 860.0,1452.0 853.0,1458.0" fill="none" stroke="#d5dce6" stroke-width="6" stroke-linecap="round" stroke-linejoin="round"/>
<polyline points="718.9,1477.9 762.7,1502.9 819.0,1492.0 863.0,1498.2" fill="none" stroke="#d5dce6" stroke-width="6" stroke-linecap="round" stroke-linejoin="round"/>
<polyline points="762.7,1502.9 753.3,1520.0" fill="none" stroke="#d5dce6" stroke-width="6" stroke-linecap="round" stroke-linejoin="round"/>
<polyline points="700.0,1470.0 720.0,1460.0" fill="none" stroke="#d5dce6" stroke-width="6" stroke-linecap="round" stroke-linejoin="round"/>
<polyline points="1050.8,1546.7 1082.0,1540.5 1146.0,1523.3" fill="none" stroke="#d5dce6" stroke-width="6" stroke-linecap="round" stroke-linejoin="round"/>
<polyline points="930.0,1660.0 945.0,1690.0" fill="none" stroke="#d5dce6" stroke-width="6" stroke-linecap="round" stroke-linejoin="round"/>
<polyline points="1000.0,1680.0 1030.0,1692.0" fill="none" stroke="#d5dce6" stroke-width="6" stroke-linecap="round" stroke-linejoin="round"/>
<polyline points="506.0,1610.0 530.0,1605.0" fill="none" stroke="#d5dce6" stroke-width="6" stroke-linecap="round" stroke-linejoin="round"/>
<polyline points="600.0,1640.0 640.0,1660.0 650.0,1692.0" fill="none" stroke="#d5dce6" stroke-width="6" stroke-linecap="round" stroke-linejoin="round"/>
<polyline points="1726.0,1622.5 1759.8,1619.2" fill="none" stroke="#d5dce6" stroke-width="6" stroke-linecap="round" stroke-linejoin="round"/>
<polyline points="1945.4,1425.0 1933.6,1472.3 1947.1,1504.4 1938.7,1523.0 1881.3,1570.2 1817.2,1620.9 1786.8,1624.2 1776.6,1604.0" fill="none" stroke="#d5dce6" stroke-width="6" stroke-linecap="round" stroke-linejoin="round"/>
<polyline points="1945.4,1425.0 1965.0,1420.0 1968.0,1414.0" fill="none" stroke="#d5dce6" stroke-width="6" stroke-linecap="round" stroke-linejoin="round"/>
<polyline points="1945.4,1425.0 1935.0,1418.0" fill="none" stroke="#d5dce6" stroke-width="6" stroke-linecap="round" stroke-linejoin="round"/>
<polyline points="1842.5,1668.0 1894.8,1654.6 1955.6,1647.9 1969.0,1624.2 1996.0,1617.5" fill="none" stroke="#d5dce6" stroke-width="6" stroke-linecap="round" stroke-linejoin="round"/>
<polyline points="1726.0,1336.0 1762.0,1332.0" fill="none" stroke="#d5dce6" stroke-width="6" stroke-linecap="round" stroke-linejoin="round"/>
<polyline points="1729.0,1435.0 1745.0,1445.0 1780.0,1440.0 1800.0,1458.0 1808.0,1459.0" fill="none" stroke="#d5dce6" stroke-width="6" stroke-linecap="round" stroke-linejoin="round"/>
<polyline points="1874.5,1026.0 1928.6,1045.3 1996.0,1040.0 2026.5,1015.0" fill="none" stroke="#d5dce6" stroke-width="6" stroke-linecap="round" stroke-linejoin="round"/>
<polyline points="1852.0,1085.0 1826.0,1102.7 1776.0,1120.0 1726.0,1140.0" fill="none" stroke="#d5dce6" stroke-width="6" stroke-linecap="round" stroke-linejoin="round"/>
<polyline points="1851.0,1085.8 1854.3,1048.7 1881.3,1043.7 1884.6,1062.5" fill="none" stroke="#d5dce6" stroke-width="6" stroke-linecap="round" stroke-linejoin="round"/>
<polyline points="1851.0,1085.8 1868.0,1099.3 1928.6,1106.0 1962.3,1085.8 2032.2,1052.0 2045.7,1050.3 2059.2,1069.0 2062.5,1096.0 2099.7,1123.0 2111.5,1146.6 2101.3,1171.9" fill="none" stroke="#d5dce6" stroke-width="6" stroke-linecap="round" stroke-linejoin="round"/>
<polyline points="1928.6,1106.0 1962.0,1093.0 2011.3,1085.8" fill="none" stroke="#d5dce6" stroke-width="6" stroke-linecap="round" stroke-linejoin="round"/>
<polyline points="1770.0,1136.5 1807.0,1136.5 1810.6,1146.6 1805.6,1187.0 1813.7,1210.7" fill="none" stroke="#d5dce6" stroke-width="6" stroke-linecap="round" stroke-linejoin="round"/>
<polyline points="1790.0,1030.0 1798.0,1018.0" fill="none" stroke="#d5dce6" stroke-width="6" stroke-linecap="round" stroke-linejoin="round"/>
<polyline points="1930.0,1045.0 1933.0,1030.0" fill="none" stroke="#d5dce6" stroke-width="6" stroke-linecap="round" stroke-linejoin="round"/>
<polyline points="1738.0,1280.0 1778.0,1268.0" fill="none" stroke="#d5dce6" stroke-width="6" stroke-linecap="round" stroke-linejoin="round"/>
<clipPath id="gridclip"><polygon points="1086,888 1236,888 1262,930 1300,958 1345,990 1340,1004 1220,1040 1140,1060 1086,1064"/></clipPath>
<g clip-path="url(#gridclip)" fill="none" stroke="#d5dce6" stroke-width="6" stroke-linecap="round">
<line x1="962.8" y1="912.0" x2="1165.1" y2="1185.3"/>
<line x1="987.6" y1="893.4" x2="1189.9" y2="1166.7"/>
<line x1="1012.4" y1="874.8" x2="1214.7" y2="1148.1"/>
<line x1="1037.2" y1="856.2" x2="1239.5" y2="1129.5"/>
<line x1="1086.8" y1="819.0" x2="1289.1" y2="1092.3"/>
<line x1="1111.6" y1="800.4" x2="1313.9" y2="1073.7"/>
<line x1="1136.4" y1="781.8" x2="1338.7" y2="1055.1"/>
<line x1="1161.2" y1="763.2" x2="1363.5" y2="1036.5"/>
<line x1="1186.0" y1="744.6" x2="1388.3" y2="1017.9"/>
<line x1="952.7" y1="942.1" x2="1248.7" y2="720.1"/>
<line x1="971.2" y1="967.0" x2="1267.2" y2="745.0"/>
<line x1="989.6" y1="991.9" x2="1285.6" y2="769.9"/>
<line x1="1008.0" y1="1016.8" x2="1304.0" y2="794.8"/>
<line x1="1026.5" y1="1041.7" x2="1322.5" y2="819.7"/>
<line x1="1044.9" y1="1066.7" x2="1340.9" y2="844.7"/>
<line x1="1063.4" y1="1091.6" x2="1359.4" y2="869.6"/>
<line x1="1081.8" y1="1116.5" x2="1377.8" y2="894.5"/>
<line x1="1100.3" y1="1141.4" x2="1396.3" y2="919.4"/>
<line x1="1118.7" y1="1166.4" x2="1414.7" y2="944.4"/>
</g>
<polyline points="1700.0,1040.0 1790.0,1010.0" fill="none" stroke="#d9dfe8" stroke-width="5" stroke-linecap="round"/>
<polyline points="1710.0,1000.0 1725.0,1035.0 1740.0,1060.0" fill="none" stroke="#d9dfe8" stroke-width="5" stroke-linecap="round"/>
<polyline points="1790.0,1022.0 1802.0,1050.0" fill="none" stroke="#d9dfe8" stroke-width="5" stroke-linecap="round"/>
<polyline points="1750.0,1040.0 1784.0,1002.0" fill="none" stroke="#d9dfe8" stroke-width="5" stroke-linecap="round"/>
<polyline points="905.0,903.0 880.0,1040.0 856.7,1096.6 822.2,1140.5 772.0,1198.4 715.8,1221.9 698.5,1243.8 701.7,1265.7 718.9,1293.0 753.3,1355.7 819.0,1415.2 844.1,1468.5 894.2,1521.7 913.0,1537.3 919.3,1571.8 913.0,1618.7 897.4,1695.0" fill="none" stroke="#7d96b4" stroke-width="12" stroke-linecap="round" stroke-linejoin="round"/>
<polyline points="1100.0,888.0 1108.0,908.8 1151.7,974.5 1195.6,1021.5 1217.5,1030.9 1240.0,1034.0 1367.8,1037.0 1397.0,1045.0 1411.6,1059.0 1446.0,1081.0 1483.6,1102.9 1518.0,1109.0 1562.0,1099.8 1640.0,1093.5 1726.0,1068.5 1776.6,1045.3 1871.2,1023.4 1955.6,1008.2 2077.0,1009.9" fill="none" stroke="#7d96b4" stroke-width="12" stroke-linecap="round" stroke-linejoin="round"/>
<polyline points="506.0,1648.0 530.0,1658.0 545.0,1670.0 556.0,1692.0" fill="none" stroke="#7d96b4" stroke-width="12" stroke-linecap="round" stroke-linejoin="round"/>
<polyline points="905.0,903.0 880.0,1040.0 856.7,1096.6 822.2,1140.5 772.0,1198.4 715.8,1221.9 698.5,1243.8 701.7,1265.7 718.9,1293.0 753.3,1355.7 819.0,1415.2 844.1,1468.5 894.2,1521.7 913.0,1537.3 919.3,1571.8 913.0,1618.7 897.4,1695.0" fill="none" stroke="#8aa3c0" stroke-width="8.5" stroke-linecap="round" stroke-linejoin="round"/>
<polyline points="1100.0,888.0 1108.0,908.8 1151.7,974.5 1195.6,1021.5 1217.5,1030.9 1240.0,1034.0 1367.8,1037.0 1397.0,1045.0 1411.6,1059.0 1446.0,1081.0 1483.6,1102.9 1518.0,1109.0 1562.0,1099.8 1640.0,1093.5 1726.0,1068.5 1776.6,1045.3 1871.2,1023.4 1955.6,1008.2 2077.0,1009.9" fill="none" stroke="#8aa3c0" stroke-width="8.5" stroke-linecap="round" stroke-linejoin="round"/>
<polyline points="506.0,1648.0 530.0,1658.0 545.0,1670.0 556.0,1692.0" fill="none" stroke="#8aa3c0" stroke-width="8.5" stroke-linecap="round" stroke-linejoin="round"/>
<polyline points="900.5,1528.0 935.0,1537.3" fill="none" stroke="#8aa3c0" stroke-width="9" stroke-linecap="round"/>
<polyline points="1518.0,1109.0 1530.0,1122.0" fill="none" stroke="#8aa3c0" stroke-width="9" stroke-linecap="round"/>
<text transform="translate(895.0,1152.0) rotate(6) translate(-49.0,7.8) scale(0.980,1)" style="font-size:25.0px" fill="#1f3a5f" stroke="#fff" stroke-width="4" stroke-linejoin="round" paint-order="stroke">노두목길</text>
<text transform="translate(895.0,1152.0) rotate(6) translate(-49.0,7.8) scale(0.980,1)" style="font-size:25.0px" fill="#1f3a5f" stroke="#1f3a5f" stroke-width="0.3">노두목길</text>
<text transform="translate(1141.0,1130.4) rotate(9) translate(-63.3,7.4) scale(0.863,1)" style="font-size:24.0px" fill="#1f3a5f" stroke="#fff" stroke-width="4" stroke-linejoin="round" paint-order="stroke">노두목52번길</text>
<text transform="translate(1141.0,1130.4) rotate(9) translate(-63.3,7.4) scale(0.863,1)" style="font-size:24.0px" fill="#1f3a5f" stroke="#1f3a5f" stroke-width="0.3">노두목52번길</text>
<text transform="translate(768.0,1128.0) rotate(64) translate(-32.9,7.8) scale(0.877,1)" style="font-size:25.0px" fill="#1f3a5f" stroke="#fff" stroke-width="4" stroke-linejoin="round" paint-order="stroke">신동로</text>
<text transform="translate(768.0,1128.0) rotate(64) translate(-32.9,7.8) scale(0.877,1)" style="font-size:25.0px" fill="#1f3a5f" stroke="#1f3a5f" stroke-width="0.3">신동로</text>
<text transform="translate(1324.8,1226.5) rotate(-24) translate(-54.9,7.4) scale(0.894,1)" style="font-size:24.0px" fill="#1f3a5f" stroke="#fff" stroke-width="4" stroke-linejoin="round" paint-order="stroke">주도21번길</text>
<text transform="translate(1324.8,1226.5) rotate(-24) translate(-54.9,7.4) scale(0.894,1)" style="font-size:24.0px" fill="#1f3a5f" stroke="#1f3a5f" stroke-width="0.3">주도21번길</text>
<text transform="translate(1566.6,1153.8) rotate(49) translate(-38.5,7.8) scale(1.027,1)" style="font-size:25.0px" fill="#1f3a5f" stroke="#fff" stroke-width="4" stroke-linejoin="round" paint-order="stroke">중앙길</text>
<text transform="translate(1566.6,1153.8) rotate(49) translate(-38.5,7.8) scale(1.027,1)" style="font-size:25.0px" fill="#1f3a5f" stroke="#1f3a5f" stroke-width="0.3">중앙길</text>
<text transform="translate(994.4,1544.4) rotate(3) translate(-58.9,8.1) scale(0.907,1)" style="font-size:26.0px" fill="#1f3a5f" stroke="#fff" stroke-width="4" stroke-linejoin="round" paint-order="stroke">청해진남로</text>
<text transform="translate(994.4,1544.4) rotate(3) translate(-58.9,8.1) scale(0.907,1)" style="font-size:26.0px" fill="#1f3a5f" stroke="#1f3a5f" stroke-width="0.3">청해진남로</text>
<text transform="translate(1640.0,1482.5) rotate(28) translate(-82.3,7.4) scale(0.846,1)" style="font-size:24.0px" fill="#1f3a5f" stroke="#fff" stroke-width="4" stroke-linejoin="round" paint-order="stroke">청해진남로39번길</text>
<text transform="translate(1640.0,1482.5) rotate(28) translate(-82.3,7.4) scale(0.846,1)" style="font-size:24.0px" fill="#1f3a5f" stroke="#1f3a5f" stroke-width="0.3">청해진남로39번길</text>
<text transform="translate(1773.4,1311.4) rotate(5) translate(-29.8,7.1) scale(0.864,1)" style="font-size:23.0px" fill="#1f3a5f" stroke="#fff" stroke-width="4" stroke-linejoin="round" paint-order="stroke">중앙길</text>
<text transform="translate(1773.4,1311.4) rotate(5) translate(-29.8,7.1) scale(0.864,1)" style="font-size:23.0px" fill="#1f3a5f" stroke="#1f3a5f" stroke-width="0.3">중앙길</text>
<text transform="translate(1755.5,1526.3) rotate(72) translate(-34.4,7.4) scale(0.956,1)" style="font-size:24.0px" fill="#1f3a5f" stroke="#fff" stroke-width="4" stroke-linejoin="round" paint-order="stroke">중앙길</text>
<text transform="translate(1755.5,1526.3) rotate(72) translate(-34.4,7.4) scale(0.956,1)" style="font-size:24.0px" fill="#1f3a5f" stroke="#1f3a5f" stroke-width="0.3">중앙길</text>
<text transform="translate(1817.0,1680.0) rotate(-25) translate(-29.8,7.1) scale(0.864,1)" style="font-size:23.0px" fill="#1f3a5f" stroke="#fff" stroke-width="4" stroke-linejoin="round" paint-order="stroke">군내길</text>
<text transform="translate(1817.0,1680.0) rotate(-25) translate(-29.8,7.1) scale(0.864,1)" style="font-size:23.0px" fill="#1f3a5f" stroke="#1f3a5f" stroke-width="0.3">군내길</text>
<text transform="translate(1277.0,1688.0) rotate(4) translate(-28.8,7.1) scale(0.834,1)" style="font-size:23.0px" fill="#1f3a5f" stroke="#fff" stroke-width="4" stroke-linejoin="round" paint-order="stroke">망석길</text>
<text transform="translate(1277.0,1688.0) rotate(4) translate(-28.8,7.1) scale(0.834,1)" style="font-size:23.0px" fill="#1f3a5f" stroke="#1f3a5f" stroke-width="0.3">망석길</text>
<path d="M618,919 L634,932 L650,919 Z" fill="#fff"/>
<circle cx="634" cy="902.5" r="24" fill="rgba(0,0,0,0.12)"/>
<circle cx="634" cy="901" r="24" fill="#fff"/>
<path d="M618,919 L634,931 L650,919 Z" fill="#fff"/>
<circle cx="634" cy="901" r="20" fill="#1aa06a"/>
<g transform="translate(634,901)" fill="#fff" stroke="none"><path d="M0,-13 L7,-4 h-3 L9,3 h-4 L11,9 h-22 L-5,3 h-4 L-4,-4 h-3 z"/><rect x="-2" y="9" width="4" height="5"/></g>
<path d="M1228,919 L1244,932 L1260,919 Z" fill="#fff"/>
<circle cx="1244" cy="902.5" r="24" fill="rgba(0,0,0,0.12)"/>
<circle cx="1244" cy="901" r="24" fill="#fff"/>
<path d="M1228,919 L1244,931 L1260,919 Z" fill="#fff"/>
<circle cx="1244" cy="901" r="20" fill="#f47b20"/>
<g transform="translate(1244,901)" fill="#fff" stroke="none"><path d="M-9,-11 h2 v7 h1.5 v-7 h2 v7 h1.5 v-7 h2 v9 q0,4 -3.5,5 v10 h-2.5 v-10 q-3,-1 -3,-5 z"/><path d="M4,-11 q6,1 6,10 v4 h-3 v11 h-3 z"/></g>
<path d="M1381.5,1053.6 L1397.5,1066.6 L1413.5,1053.6 Z" fill="#fff"/>
<circle cx="1397.5" cy="1037.1" r="24" fill="rgba(0,0,0,0.12)"/>
<circle cx="1397.5" cy="1035.6" r="24" fill="#fff"/>
<path d="M1381.5,1053.6 L1397.5,1065.6 L1413.5,1053.6 Z" fill="#fff"/>
<circle cx="1397.5" cy="1035.6" r="20" fill="#f649c6"/>
<g transform="translate(1397.5,1035.6)" fill="#fff" stroke="none"><rect x="-12" y="-9" width="3" height="18"/><rect x="9" y="-3" width="3" height="12"/><rect x="-12" y="2" width="24" height="4"/><circle cx="-5" cy="-3" r="3"/><rect x="-1" y="-5" width="12" height="6" rx="1"/></g>
<path d="M1742,1078.5 L1758,1091.5 L1774,1078.5 Z" fill="#fff"/>
<circle cx="1758" cy="1062.0" r="24" fill="rgba(0,0,0,0.12)"/>
<circle cx="1758" cy="1060.5" r="24" fill="#fff"/>
<path d="M1742,1078.5 L1758,1090.5 L1774,1078.5 Z" fill="#fff"/>
<circle cx="1758" cy="1060.5" r="20" fill="#b466f6"/>
<g transform="translate(1758,1060.5)" fill="#fff" stroke="none"><path d="M-12,-6 h6 l2,-4 h8 l2,4 h6 v15 h-24 z"/><circle cx="0" cy="2" r="4.5" fill="#b466f6"/><path d="M-10,-14 v6 M-13,-11 h6" stroke="#fff" stroke-width="2"/></g>
<path d="M2012.8,994 L2028.8,1007 L2044.8,994 Z" fill="#fff"/>
<circle cx="2028.8" cy="977.5" r="24" fill="rgba(0,0,0,0.12)"/>
<circle cx="2028.8" cy="976" r="24" fill="#fff"/>
<path d="M2012.8,994 L2028.8,1006 L2044.8,994 Z" fill="#fff"/>
<circle cx="2028.8" cy="976" r="20" fill="#7a8c99"/>
<g transform="translate(2028.8,976)" fill="#fff" stroke="none"><path d="M-11,-4 L0,-11 L11,-4 z"/><rect x="-9" y="-3" width="18" height="2.5"/><rect x="-7" y="0" width="3" height="7"/><rect x="4" y="0" width="3" height="7"/><rect x="-1.5" y="0" width="3" height="7"/><rect x="-11" y="8" width="22" height="2.5"/></g>
<path d="M1508.4,1220.3 L1524.4,1233.3 L1540.4,1220.3 Z" fill="#fff"/>
<circle cx="1524.4" cy="1203.8" r="24" fill="rgba(0,0,0,0.12)"/>
<circle cx="1524.4" cy="1202.3" r="24" fill="#fff"/>
<path d="M1508.4,1220.3 L1524.4,1232.3 L1540.4,1220.3 Z" fill="#fff"/>
<circle cx="1524.4" cy="1202.3" r="20" fill="#f47b20"/>
<g transform="translate(1524.4,1202.3)" fill="#fff" stroke="none"><path d="M-10,-9 h16 v9 q0,7 -8,7 q-8,0 -8,-7 z"/><path d="M6,-6 h3 q4,0 4,4 q0,4 -4,4 h-3 v-3 h2.5 q1.5,0 1.5,-1 q0,-1 -1.5,-1 h-2.5 z"/><rect x="-12" y="10" width="22" height="2.5"/><rect x="-6" y="-7" width="0" height="0"/></g>
<path d="M1923.4,1194.3 L1939.4,1207.3 L1955.4,1194.3 Z" fill="#fff"/>
<circle cx="1939.4" cy="1177.8" r="24" fill="rgba(0,0,0,0.12)"/>
<circle cx="1939.4" cy="1176.3" r="24" fill="#fff"/>
<path d="M1923.4,1194.3 L1939.4,1206.3 L1955.4,1194.3 Z" fill="#fff"/>
<circle cx="1939.4" cy="1176.3" r="20" fill="#1aa06a"/>
<g transform="translate(1939.4,1176.3)" fill="#fff" stroke="none"><path d="M0,-13 L7,-4 h-3 L9,3 h-4 L11,9 h-22 L-5,3 h-4 L-4,-4 h-3 z"/><rect x="-2" y="9" width="4" height="5"/></g>
<path d="M1706.8,1382.8 L1722.8,1395.8 L1738.8,1382.8 Z" fill="#fff"/>
<circle cx="1722.8" cy="1366.3" r="24" fill="rgba(0,0,0,0.12)"/>
<circle cx="1722.8" cy="1364.8" r="24" fill="#fff"/>
<path d="M1706.8,1382.8 L1722.8,1394.8 L1738.8,1382.8 Z" fill="#fff"/>
<circle cx="1722.8" cy="1364.8" r="20" fill="#f47b20"/>
<g transform="translate(1722.8,1364.8)" fill="#fff" stroke="none"><path d="M-9,-11 h2 v7 h1.5 v-7 h2 v7 h1.5 v-7 h2 v9 q0,4 -3.5,5 v10 h-2.5 v-10 q-3,-1 -3,-5 z"/><path d="M4,-11 q6,1 6,10 v4 h-3 v11 h-3 z"/></g>
<path d="M1985.2,1326.6 L2001.2,1339.6 L2017.2,1326.6 Z" fill="#fff"/>
<circle cx="2001.2" cy="1310.1" r="24" fill="rgba(0,0,0,0.12)"/>
<circle cx="2001.2" cy="1308.6" r="24" fill="#fff"/>
<path d="M1985.2,1326.6 L2001.2,1338.6 L2017.2,1326.6 Z" fill="#fff"/>
<circle cx="2001.2" cy="1308.6" r="20" fill="#b466f6"/>
<g transform="translate(2001.2,1308.6)" fill="#fff" stroke="none"><path d="M-12,-6 h6 l2,-4 h8 l2,4 h6 v15 h-24 z"/><circle cx="0" cy="2" r="4.5" fill="#b466f6"/><path d="M-10,-14 v6 M-13,-11 h6" stroke="#fff" stroke-width="2"/></g>
<path d="M876.7,1629 L892.7,1642 L908.7,1629 Z" fill="#fff"/>
<circle cx="892.7" cy="1612.5" r="24" fill="rgba(0,0,0,0.12)"/>
<circle cx="892.7" cy="1611" r="24" fill="#fff"/>
<path d="M876.7,1629 L892.7,1641 L908.7,1629 Z" fill="#fff"/>
<circle cx="892.7" cy="1611" r="20" fill="#f47b20"/>
<g transform="translate(892.7,1611)" fill="#fff" stroke="none"><path d="M-9,-11 h2 v7 h1.5 v-7 h2 v7 h1.5 v-7 h2 v9 q0,4 -3.5,5 v10 h-2.5 v-10 q-3,-1 -3,-5 z"/><path d="M4,-11 q6,1 6,10 v4 h-3 v11 h-3 z"/></g>
<path d="M1275,1633.6 L1291,1646.6 L1307,1633.6 Z" fill="#fff"/>
<circle cx="1291" cy="1617.1" r="24" fill="rgba(0,0,0,0.12)"/>
<circle cx="1291" cy="1615.6" r="24" fill="#fff"/>
<path d="M1275,1633.6 L1291,1645.6 L1307,1633.6 Z" fill="#fff"/>
<circle cx="1291" cy="1615.6" r="20" fill="#1e8ff0"/>
<g transform="translate(1291,1615.6)" fill="#fff" stroke="none"><path d="M-12,-10 h4 l1.5,4 h17 l-4,10 h-12 z"/><circle cx="-5" cy="9" r="2.5"/><circle cx="6" cy="9" r="2.5"/></g>
<path d="M1195.2,1680.6 L1211.2,1693.6 L1227.2,1680.6 Z" fill="#fff"/>
<circle cx="1211.2" cy="1664.1" r="24" fill="rgba(0,0,0,0.12)"/>
<circle cx="1211.2" cy="1662.6" r="24" fill="#fff"/>
<path d="M1195.2,1680.6 L1211.2,1692.6 L1227.2,1680.6 Z" fill="#fff"/>
<circle cx="1211.2" cy="1662.6" r="20" fill="#77889a"/>
<g transform="translate(1211.2,1662.6)" fill="#fff" stroke="none"><circle cx="0" cy="0" r="9"/></g>
<path d="M508.79999999999995,1661.8 L524.8,1674.8 L540.8,1661.8 Z" fill="#fff"/>
<circle cx="524.8" cy="1645.3" r="24" fill="rgba(0,0,0,0.12)"/>
<circle cx="524.8" cy="1643.8" r="24" fill="#fff"/>
<path d="M508.79999999999995,1661.8 L524.8,1673.8 L540.8,1661.8 Z" fill="#fff"/>
<circle cx="524.8" cy="1643.8" r="20" fill="#f47b20"/>
<g transform="translate(524.8,1643.8)" fill="#fff" stroke="none"><path d="M-9,-11 h2 v7 h1.5 v-7 h2 v7 h1.5 v-7 h2 v9 q0,4 -3.5,5 v10 h-2.5 v-10 q-3,-1 -3,-5 z"/><path d="M4,-11 q6,1 6,10 v4 h-3 v11 h-3 z"/></g>
<circle cx="678" cy="1708" r="24" fill="#fff"/><circle cx="678" cy="1708" r="20" fill="#5b6ec2"/>
<rect x="1711" y="996" width="30" height="30" rx="13" fill="#fff"/><rect x="1714" y="999" width="24" height="24" rx="11" fill="#4d5e73"/>
<g fill="#fff"><rect x="1721" y="1003" width="10" height="6" rx="1.5"/><path d="M1718,1010 h16 l-2,5 h-12 z"/><rect x="1718" y="1017" width="16" height="2"/></g>
<rect x="889" y="889" width="32" height="24" rx="11" fill="#fff"/><rect x="891" y="891" width="28" height="20" rx="9" fill="#3b77cb"/>
<text x="905" y="907.5" text-anchor="middle" style="font-size:18px;font-weight:700;letter-spacing:-1px" fill="#fff">77</text>
<rect x="702" y="1271" width="32" height="24" rx="11" fill="#fff"/><rect x="704" y="1273" width="28" height="20" rx="9" fill="#3b77cb"/>
<text x="718" y="1289.5" text-anchor="middle" style="font-size:18px;font-weight:700;letter-spacing:-1px" fill="#fff">77</text>
<text transform="translate(665.7,920.2) scale(0.859,1)" x="-1.2" y="0" style="font-size:29.5px" fill="#1b8c5b" stroke="#fff" stroke-width="4" stroke-linejoin="round" paint-order="stroke">완도체육공원</text>
<text transform="translate(505.0,964.3) scale(0.803,1)" x="-1.1" y="0" style="font-size:28.4px" fill="#d93025" stroke="#fff" stroke-width="4" stroke-linejoin="round" paint-order="stroke">원</text>
<text transform="translate(1087.0,912.3) scale(0.887,1)" x="-1.1" y="0" style="font-size:28.4px" fill="#d4620f" stroke="#fff" stroke-width="4" stroke-linejoin="round" paint-order="stroke">일억조식당</text>
<text transform="translate(1050.0,1064.3) scale(1.069,1)" x="-1.3" y="0" style="font-size:32.4px" fill="#d4620f" stroke="#fff" stroke-width="4" stroke-linejoin="round" paint-order="stroke">지점</text>
<text transform="translate(1239.4,1048.9) scale(0.853,1)" x="-1.2" y="0" style="font-size:30.2px" fill="#e33cb2" stroke="#fff" stroke-width="4" stroke-linejoin="round" paint-order="stroke">완도네시아</text>
<text transform="translate(1565.0,1073.8) scale(0.808,1)" x="-1.3" y="0" style="font-size:32.2px" fill="#9a3fee" stroke="#fff" stroke-width="4" stroke-linejoin="round" paint-order="stroke">완도 모노레일</text>
<text transform="translate(1555.6,1214.8) scale(0.849,1)" x="-1.2" y="0" style="font-size:30.3px" fill="#d4620f" stroke="#fff" stroke-width="4" stroke-linejoin="round" paint-order="stroke">달스윗</text>
<text transform="translate(1777.6,966.4) scale(0.932,1)" x="-0.8" y="0" style="font-size:19.5px" fill="#2b7e97" stroke="#fff" stroke-width="4" stroke-linejoin="round" paint-order="stroke">완도항</text>
<text transform="translate(2060.2,972.5) scale(0.968,1)" x="-1.1" y="0" style="font-size:26.7px" fill="#5d6c78" stroke="#fff" stroke-width="4" stroke-linejoin="round" paint-order="stroke">완도해양</text>
<text transform="translate(2060.2,1002.5) scale(0.841,1)" x="-1.2" y="0" style="font-size:30.7px" fill="#5d6c78" stroke="#fff" stroke-width="4" stroke-linejoin="round" paint-order="stroke">경찰서 전용부두</text>
<text transform="translate(1729.4,1188.4) scale(0.879,1)" x="-1.2" y="0" style="font-size:28.9px" fill="#1b8c5b" stroke="#fff" stroke-width="4" stroke-linejoin="round" paint-order="stroke">다도해일출공원</text>
<text transform="translate(1419.4,1331.0) scale(0.858,1)" x="-1.4" y="0" style="font-size:33.8px" fill="#202124" stroke="#fff" stroke-width="5" stroke-linejoin="round" paint-order="stroke">완도군</text>
<text transform="translate(1419.4,1331.0) scale(0.858,1)" x="-1.4" y="0" style="font-size:33.8px" fill="#202124" stroke="#202124" stroke-width="0.7">완도군</text>
<text transform="translate(1457.0,1459.4) scale(0.904,1)" x="-0.9" y="0" style="font-size:21.4px" fill="#3c4043" stroke="#fff" stroke-width="4" stroke-linejoin="round" paint-order="stroke">군내리</text>
<text transform="translate(1590.0,1376.8) scale(0.839,1)" x="-1.2" y="0" style="font-size:30.5px" fill="#d4620f" stroke="#fff" stroke-width="4" stroke-linejoin="round" paint-order="stroke">청솔가든</text>
<text transform="translate(1867.8,1321.4) scale(0.828,1)" x="-1.2" y="0" style="font-size:30.7px" fill="#9a3fee" stroke="#fff" stroke-width="4" stroke-linejoin="round" paint-order="stroke">완도타워</text>
<text transform="translate(733.0,1624.2) scale(0.853,1)" x="-1.2" y="0" style="font-size:30.2px" fill="#d4620f" stroke="#fff" stroke-width="4" stroke-linejoin="round" paint-order="stroke">초계산가든</text>
<text transform="translate(1000.7,1674.3) scale(0.904,1)" x="-1.1" y="0" style="font-size:28.4px" fill="#5f6c79" stroke="#fff" stroke-width="4" stroke-linejoin="round" paint-order="stroke">망석리여노인정</text>
<text transform="translate(1324.0,1629.1) scale(0.885,1)" x="-1.1" y="0" style="font-size:28.4px" fill="#1a73e8" stroke="#fff" stroke-width="4" stroke-linejoin="round" paint-order="stroke">대흥수산</text>
<path d="M1459.8,1294.4 C1456.8,1280.4 1434.8,1264.4 1434.8,1247.4 A25,25 0 1,1 1484.8,1247.4 C1484.8,1264.4 1462.8,1280.4 1459.8,1294.4 Z" fill="#ea4335" stroke="#b8221a" stroke-width="2"/>
<circle cx="1459.8" cy="1248.4" r="10" fill="#b31412"/>
<text x="1416.3" y="1647" style="font-size:31px;letter-spacing:-1.2px" stroke="#fff" stroke-width="3" paint-order="stroke"><tspan fill="#4285f4">G</tspan><tspan fill="#ea4335">o</tspan><tspan fill="#fbbc05">o</tspan><tspan fill="#4285f4">g</tspan><tspan fill="#34a853">l</tspan><tspan fill="#ea4335">e</tspan></text>
<circle cx="2354" cy="1602" r="41" fill="rgba(0,0,0,0.18)"/><circle cx="2354" cy="1600" r="40" fill="#fff"/>
<g fill="none" stroke="#666" stroke-width="4.5" stroke-linecap="butt" stroke-linejoin="miter"><path d="M2346,1583 L2354,1575 L2362,1583"/><path d="M2346,1617 L2354,1625 L2362,1617"/><path d="M2337,1592 L2329,1600 L2337,1608"/><path d="M2371,1592 L2379,1600 L2371,1608"/></g>
<rect x="527" y="1584" width="86" height="84" rx="5" fill="rgba(0,0,0,0.2)"/><rect x="528.5" y="1583.7" width="83.3" height="82.6" rx="4" fill="#fff"/>
<rect x="532.5" y="1587.7" width="75.3" height="74.6" fill="#7f8672"/>
<g clip-path="url(#satclip)"><clipPath id="satclip"><rect x="532.5" y="1587.7" width="75.3" height="74.6"/></clipPath><ellipse cx="550.3" cy="1628.3" rx="4.6" ry="4.5" fill="#5d6e5a" opacity="0.8"/><ellipse cx="576.1" cy="1632.9" rx="8.4" ry="3.8" fill="#b7b39a" opacity="0.8"/><ellipse cx="550.1" cy="1662.0" rx="5.3" ry="5.7" fill="#a9a58c" opacity="0.8"/><ellipse cx="562.3" cy="1651.9" rx="3.6" ry="2.3" fill="#b7b39a" opacity="0.8"/><ellipse cx="561.7" cy="1588.8" rx="7.4" ry="2.3" fill="#b7b39a" opacity="0.8"/><ellipse cx="535.7" cy="1645.9" rx="7.8" ry="2.8" fill="#b7b39a" opacity="0.8"/><ellipse cx="586.4" cy="1653.3" rx="7.0" ry="6.1" fill="#a9a58c" opacity="0.8"/><ellipse cx="587.1" cy="1630.7" rx="8.7" ry="2.2" fill="#27433a" opacity="0.8"/><ellipse cx="539.8" cy="1597.8" rx="3.5" ry="6.3" fill="#a9a58c" opacity="0.8"/><ellipse cx="590.9" cy="1651.5" rx="4.9" ry="5.7" fill="#b7b39a" opacity="0.8"/><ellipse cx="558.8" cy="1631.3" rx="6.1" ry="6.0" fill="#5d6e5a" opacity="0.8"/><ellipse cx="601.2" cy="1589.8" rx="4.0" ry="4.5" fill="#5d6e5a" opacity="0.8"/><ellipse cx="544.7" cy="1651.9" rx="8.8" ry="6.0" fill="#b7b39a" opacity="0.8"/><ellipse cx="540.3" cy="1636.6" rx="6.4" ry="6.4" fill="#27433a" opacity="0.8"/><ellipse cx="553.9" cy="1592.4" rx="8.0" ry="6.4" fill="#2f4d40" opacity="0.8"/><ellipse cx="558.3" cy="1592.7" rx="8.3" ry="1.6" fill="#a9a58c" opacity="0.8"/><ellipse cx="590.2" cy="1652.8" rx="2.3" ry="4.6" fill="#2f4d40" opacity="0.8"/><ellipse cx="560.8" cy="1631.4" rx="5.9" ry="6.1" fill="#27433a" opacity="0.8"/><ellipse cx="570.4" cy="1662.2" rx="4.2" ry="1.9" fill="#b7b39a" opacity="0.8"/><ellipse cx="572.7" cy="1658.5" rx="8.8" ry="3.0" fill="#27433a" opacity="0.8"/><ellipse cx="544.2" cy="1590.9" rx="8.1" ry="3.1" fill="#3b5a4a" opacity="0.8"/><ellipse cx="599.7" cy="1615.9" rx="5.2" ry="4.1" fill="#5d6e5a" opacity="0.8"/><ellipse cx="597.5" cy="1638.5" rx="2.7" ry="6.4" fill="#8e907a" opacity="0.8"/><ellipse cx="570.5" cy="1619.9" rx="7.0" ry="2.7" fill="#27433a" opacity="0.8"/><ellipse cx="565.3" cy="1607.0" rx="4.1" ry="3.2" fill="#8e907a" opacity="0.8"/><ellipse cx="563.6" cy="1631.0" rx="2.1" ry="4.6" fill="#5d6e5a" opacity="0.8"/><ellipse cx="542.5" cy="1635.0" rx="4.3" ry="3.3" fill="#27433a" opacity="0.8"/><ellipse cx="578.2" cy="1608.5" rx="5.4" ry="4.4" fill="#5d6e5a" opacity="0.8"/><ellipse cx="534.1" cy="1615.2" rx="6.4" ry="3.0" fill="#b7b39a" opacity="0.8"/><ellipse cx="556.5" cy="1614.9" rx="4.2" ry="3.3" fill="#b7b39a" opacity="0.8"/><ellipse cx="552.3" cy="1646.4" rx="2.7" ry="5.6" fill="#b7b39a" opacity="0.8"/><ellipse cx="583.8" cy="1597.5" rx="5.5" ry="4.8" fill="#27433a" opacity="0.8"/><ellipse cx="550.4" cy="1601.7" rx="5.0" ry="5.0" fill="#2f4d40" opacity="0.8"/><ellipse cx="577.6" cy="1658.5" rx="6.7" ry="2.6" fill="#8e907a" opacity="0.8"/><ellipse cx="596.7" cy="1600.3" rx="4.4" ry="4.8" fill="#b7b39a" opacity="0.8"/><ellipse cx="566.3" cy="1604.5" rx="2.8" ry="4.1" fill="#3b5a4a" opacity="0.8"/><ellipse cx="556.1" cy="1650.1" rx="6.0" ry="5.8" fill="#27433a" opacity="0.8"/><ellipse cx="593.0" cy="1635.6" rx="7.6" ry="3.2" fill="#3b5a4a" opacity="0.8"/><ellipse cx="564.1" cy="1626.4" rx="7.9" ry="3.8" fill="#5d6e5a" opacity="0.8"/><ellipse cx="563.8" cy="1619.0" rx="4.9" ry="6.1" fill="#3b5a4a" opacity="0.8"/><ellipse cx="547.5" cy="1623.3" rx="7.8" ry="4.6" fill="#b7b39a" opacity="0.8"/><ellipse cx="565.1" cy="1658.6" rx="8.5" ry="2.6" fill="#5d6e5a" opacity="0.8"/><ellipse cx="566.8" cy="1643.9" rx="7.2" ry="6.3" fill="#b7b39a" opacity="0.8"/><ellipse cx="558.1" cy="1604.7" rx="2.5" ry="4.4" fill="#27433a" opacity="0.8"/><ellipse cx="541.5" cy="1605.9" rx="2.2" ry="5.5" fill="#b7b39a" opacity="0.8"/><ellipse cx="601.8" cy="1654.6" rx="8.3" ry="4.4" fill="#2f4d40" opacity="0.8"/><ellipse cx="568.6" cy="1596.7" rx="5.5" ry="2.7" fill="#2f4d40" opacity="0.8"/><ellipse cx="571.9" cy="1618.6" rx="8.6" ry="4.6" fill="#27433a" opacity="0.8"/><ellipse cx="541.9" cy="1660.2" rx="5.8" ry="5.6" fill="#2f4d40" opacity="0.8"/><ellipse cx="558.9" cy="1602.4" rx="5.7" ry="5.6" fill="#3b5a4a" opacity="0.8"/><ellipse cx="550.5" cy="1608.1" rx="8.2" ry="2.1" fill="#2f4d40" opacity="0.8"/><ellipse cx="569.1" cy="1630.3" rx="4.8" ry="5.3" fill="#3b5a4a" opacity="0.8"/><ellipse cx="552.6" cy="1627.0" rx="5.0" ry="3.9" fill="#8e907a" opacity="0.8"/><ellipse cx="594.0" cy="1651.6" rx="7.4" ry="1.7" fill="#2f4d40" opacity="0.8"/><ellipse cx="537.6" cy="1660.4" rx="8.0" ry="1.9" fill="#b7b39a" opacity="0.8"/><ellipse cx="569.2" cy="1599.4" rx="2.5" ry="3.4" fill="#a9a58c" opacity="0.8"/><ellipse cx="576.5" cy="1614.6" rx="3.3" ry="3.1" fill="#2f4d40" opacity="0.8"/><ellipse cx="542.1" cy="1588.0" rx="7.1" ry="5.5" fill="#b7b39a" opacity="0.8"/><ellipse cx="545.9" cy="1615.5" rx="6.2" ry="5.4" fill="#a9a58c" opacity="0.8"/><ellipse cx="580.3" cy="1590.9" rx="8.2" ry="1.8" fill="#5d6e5a" opacity="0.8"/><ellipse cx="569.7" cy="1640.1" rx="4.9" ry="5.0" fill="#a9a58c" opacity="0.8"/><ellipse cx="533.8" cy="1604.0" rx="3.9" ry="4.4" fill="#8e907a" opacity="0.8"/><ellipse cx="564.4" cy="1619.5" rx="8.2" ry="6.2" fill="#27433a" opacity="0.8"/><ellipse cx="605.2" cy="1629.4" rx="8.1" ry="2.1" fill="#5d6e5a" opacity="0.8"/><ellipse cx="541.7" cy="1648.4" rx="6.6" ry="5.9" fill="#8e907a" opacity="0.8"/><ellipse cx="560.7" cy="1595.8" rx="4.2" ry="4.2" fill="#8e907a" opacity="0.8"/><ellipse cx="576.6" cy="1588.1" rx="3.0" ry="5.4" fill="#2f4d40" opacity="0.8"/><ellipse cx="572.0" cy="1629.8" rx="6.6" ry="3.4" fill="#8e907a" opacity="0.8"/><ellipse cx="534.3" cy="1650.5" rx="2.8" ry="5.7" fill="#5d6e5a" opacity="0.8"/><ellipse cx="568.6" cy="1639.6" rx="4.0" ry="3.0" fill="#2f4d40" opacity="0.8"/></g>
<rect x="1969" y="1659.7" width="447" height="32" fill="rgba(255,255,255,0.72)"/>
<rect x="2042" y="1659.7" width="2" height="32" fill="rgba(145,217,238,0.9)"/><rect x="2356" y="1659.7" width="2" height="32" fill="rgba(145,217,238,0.9)"/>
<text x="1976.7" y="1680.5" style="font-size:21px;letter-spacing:-4.51px;word-spacing:0.00px" fill="#1b1b1b">단축키</text>
<text x="2054.4" y="1680.5" style="font-size:21px;letter-spacing:-1.00px;word-spacing:1.00px" fill="#1b1b1b">지도 데이터 ©2025 TMap Mobility</text>
<text x="2366.7" y="1680.5" style="font-size:21px;letter-spacing:-6.62px;word-spacing:0.00px" fill="#1b1b1b">약관</text>
</svg></div>
<div class="box" style="left:506px;top:890px;width:1910px;height:799px;border-radius:16px;border:2px solid #e3e4e8;pointer-events:none"></div>
<div class="box" style="left:528px;top:912px;width:558px;height:184.5px;background:#fff;border-radius:4px;box-shadow:0 2px 7px 1px rgba(0,0,0,0.16)"></div>
<svg class="ic" style="left:996px;top:938px" width="42" height="40" viewBox="0 0 42 40"><path d="M4 7 L18 21 L18 38" fill="none" stroke="#c6dafc" stroke-width="7"/><path d="M18 38 L18 24 Q18 18 24 12 L33 4" fill="none" stroke="#6ea1f6" stroke-width="7"/><path d="M22 1 L39 1 L39 18 Z" fill="#6ea1f6"/></svg>
<div class="t" style="left:50.8px;top:36.6px;font-size:19px;font-weight:400;color:#6b7280;letter-spacing:0.00px;">관</div>
<div class="t" style="left:103.7px;top:20.5px;font-size:23px;font-weight:400;color:#111827;transform:scaleX(0.9074);transform-origin:0 0;-webkit-text-stroke:0.8px #111827;">관리자</div>
<div class="t" style="left:103.6px;top:55.7px;font-size:20px;font-weight:400;color:#6b7280;letter-spacing:-0.08px;">admin@noah.com</div>
<div class="t" style="left:88.5px;top:131.1px;font-size:27px;font-weight:400;color:#5f6879;transform:scaleX(0.8981);transform-origin:0 0;">대시보드</div>
<div class="t" style="left:87.6px;top:291.4px;font-size:27px;font-weight:400;color:#5f6879;transform:scaleX(0.9067);transform-origin:0 0;">수조탱크</div>
<div class="t" style="left:87.6px;top:356.0px;font-size:27px;font-weight:400;color:#5f6879;transform:scaleX(0.9240);transform-origin:0 0;">어종</div>
<div class="t" style="left:87.6px;top:516.7px;font-size:27px;font-weight:400;color:#5f6879;transform:scaleX(0.9102);transform-origin:0 0;">회원</div>
<div class="t" style="left:87.6px;top:582.2px;font-size:27px;font-weight:400;color:#5f6879;transform:scaleX(0.9078);transform-origin:0 0;">마이페이지</div>
<div class="t" style="left:88.5px;top:742.0px;font-size:27px;font-weight:400;color:#5f6879;transform:scaleX(0.8986);transform-origin:0 0;">센서 데이터</div>
<div class="t" style="left:86.6px;top:808.7px;font-size:27px;font-weight:400;color:#5f6879;transform:scaleX(0.9289);transform-origin:0 0;">비디오</div>
<div class="t" style="left:87.6px;top:875.0px;font-size:27px;font-weight:400;color:#5f6879;transform:scaleX(0.9090);transform-origin:0 0;">스냅샷</div>
<div class="t" style="left:87.5px;top:940.2px;font-size:27px;font-weight:400;color:#5f6879;transform:scaleX(0.9278);transform-origin:0 0;">R2 스토리지</div>
<div class="t" style="left:87.6px;top:1006.6px;font-size:27px;font-weight:400;color:#5f6879;transform:scaleX(0.9061);transform-origin:0 0;">디바이스 제어</div>
<div class="t" style="left:87.6px;top:1166.8px;font-size:27px;font-weight:400;color:#5f6879;transform:scaleX(0.8981);transform-origin:0 0;">공지사항</div>
<div class="t" style="left:86.7px;top:1232.7px;font-size:27px;font-weight:400;color:#5f6879;transform:scaleX(0.9101);transform-origin:0 0;">이메일 발송</div>
<div class="t" style="left:87.7px;top:1298.8px;font-size:27px;font-weight:400;color:#5f6879;transform:scaleX(0.9462);transform-origin:0 0;">DB 백업</div>
<div class="t" style="left:88.6px;top:1366.4px;font-size:27px;font-weight:400;color:#5f6879;letter-spacing:0.46px;">Swagger API</div>
<div class="t" style="left:86.9px;top:1481.0px;font-size:27px;font-weight:400;color:#5f6879;transform:scaleX(0.9144);transform-origin:0 0;">로그아웃</div>
<div class="t" style="left:30.7px;top:232.8px;font-size:24px;font-weight:400;color:#5f6879;transform:scaleX(0.9423);transform-origin:0 0;">수조 관리</div>
<div class="t" style="left:30.7px;top:458.9px;font-size:24px;font-weight:400;color:#5f6879;transform:scaleX(0.9442);transform-origin:0 0;">회원</div>
<div class="t" style="left:31.7px;top:685.0px;font-size:24px;font-weight:400;color:#5f6879;transform:scaleX(0.9262);transform-origin:0 0;">데이터 관리</div>
<div class="t" style="left:31.7px;top:1109.0px;font-size:24px;font-weight:400;color:#5f6879;transform:scaleX(0.9262);transform-origin:0 0;">시스템 관리</div>
<div class="t" style="left:454.4px;top:30.3px;font-size:33px;font-weight:700;color:#1f2937;letter-spacing:-0.97px;">Dashboard</div>
<div class="t" style="left:1682.5px;top:35.0px;font-size:24.5px;font-weight:400;color:#2b313c;transform:scaleX(0.9477);transform-origin:0 0;">2025-10-19 10:01:14 (오후)</div>
<div class="t" style="left:2214.6px;top:34.0px;font-size:21px;font-weight:400;color:#1f2937;letter-spacing:0.00px;-webkit-text-stroke:1px #1f2937;">관</div>
<div class="t" style="left:2273.4px;top:36.4px;font-size:23px;font-weight:400;color:#1f2937;letter-spacing:0.45px;">admin@noah.com</div>
<div class="t" style="left:503.1px;top:168.0px;font-size:31px;font-weight:400;color:#111827;transform:scaleX(0.8706);transform-origin:0 0;-webkit-text-stroke:0.5px #111827;">전남 완도 수조탱크 상세정보</div>
<div class="t" style="left:503.1px;top:212.4px;font-size:23.5px;font-weight:400;color:#4b5563;transform:scaleX(0.8680);transform-origin:0 0;">수조 상세 정보를 확인합니다</div>
<div class="t" style="left:504.8px;top:348.8px;font-size:24px;font-weight:400;color:#1f2937;transform:scaleX(0.9015);transform-origin:0 0;-webkit-text-stroke:0.4px #1f2937;">수조명</div>
<div class="t" style="left:990.4px;top:348.8px;font-size:24px;font-weight:400;color:#1f2937;transform:scaleX(0.8867);transform-origin:0 0;-webkit-text-stroke:0.4px #1f2937;">어종</div>
<div class="t" style="left:1476.0px;top:348.8px;font-size:24px;font-weight:400;color:#1f2937;transform:scaleX(0.8826);transform-origin:0 0;-webkit-text-stroke:0.4px #1f2937;">용량</div>
<div class="t" style="left:1961.0px;top:348.8px;font-size:24px;font-weight:400;color:#1f2937;transform:scaleX(0.9279);transform-origin:0 0;-webkit-text-stroke:0.4px #1f2937;">부피</div>
<div class="t" style="left:505.7px;top:497.6px;font-size:24px;font-weight:400;color:#1f2937;transform:scaleX(0.8739);transform-origin:0 0;-webkit-text-stroke:0.4px #1f2937;">위도</div>
<div class="t" style="left:990.6px;top:497.6px;font-size:24px;font-weight:400;color:#1f2937;transform:scaleX(0.8867);transform-origin:0 0;-webkit-text-stroke:0.4px #1f2937;">경도</div>
<div class="t" style="left:1475.6px;top:497.6px;font-size:24px;font-weight:400;color:#1f2937;transform:scaleX(0.8743);transform-origin:0 0;-webkit-text-stroke:0.4px #1f2937;">관리자</div>
<div class="t" style="left:1959.8px;top:496.6px;font-size:24px;font-weight:400;color:#1f2937;transform:scaleX(0.9329);transform-origin:0 0;-webkit-text-stroke:0.4px #1f2937;">수조 ID</div>
<div class="t" style="left:505.7px;top:645.6px;font-size:24px;font-weight:400;color:#1f2937;transform:scaleX(0.9136);transform-origin:0 0;-webkit-text-stroke:0.4px #1f2937;">설명</div>
<div class="t" style="left:505.9px;top:844.6px;font-size:24px;font-weight:400;color:#1f2937;transform:scaleX(0.8634);transform-origin:0 0;-webkit-text-stroke:0.4px #1f2937;">위치 지도</div>
<div class="t" style="left:505.4px;top:1723.4px;font-size:24px;font-weight:400;color:#1f2937;transform:scaleX(0.8691);transform-origin:0 0;-webkit-text-stroke:0.4px #1f2937;">입식날짜</div>
<div class="t" style="left:989.8px;top:1724.4px;font-size:24px;font-weight:400;color:#1f2937;transform:scaleX(0.8745);transform-origin:0 0;-webkit-text-stroke:0.4px #1f2937;">출하날짜</div>
<div class="t" style="left:1475.5px;top:1723.4px;font-size:24px;font-weight:400;color:#1f2937;transform:scaleX(0.9134);transform-origin:0 0;-webkit-text-stroke:0.4px #1f2937;">등록일</div>
<div class="t" style="left:1960.9px;top:1723.4px;font-size:24px;font-weight:400;color:#1f2937;transform:scaleX(0.9194);transform-origin:0 0;-webkit-text-stroke:0.4px #1f2937;">수정일</div>
<div class="t" style="left:531.0px;top:415.3px;font-size:23px;font-weight:400;color:#1f2937;transform:scaleX(0.9130);transform-origin:0 0;">전남 완도 수조탱크</div>
<div class="t" style="left:1016.5px;top:414.8px;font-size:23px;font-weight:400;color:#2563eb;transform:scaleX(0.9610);transform-origin:0 0;">연어</div>
<div class="t" style="left:1503.2px;top:415.6px;font-size:25px;font-weight:400;color:#1f2937;letter-spacing:-0.23px;">300.00L</div>
<div class="t" style="left:1986.9px;top:415.6px;font-size:25px;font-weight:400;color:#1f2937;letter-spacing:-0.92px;">10.00L</div>
<div class="t" style="left:532.5px;top:563.8px;font-size:25px;font-weight:400;color:#1f2937;letter-spacing:-0.30px;">34.3116000</div>
<div class="t" style="left:1016.0px;top:563.8px;font-size:25px;font-weight:400;color:#1f2937;letter-spacing:-0.10px;">126.7550000</div>
<div class="t" style="left:1501.4px;top:563.6px;font-size:23px;font-weight:400;color:#1f2937;transform:scaleX(0.9336);transform-origin:0 0;">노아웹유저</div>
<div class="t" style="left:1988.6px;top:563.8px;font-size:25px;font-weight:400;color:#1f2937;letter-spacing:1.40px;">#8</div>
<div class="t" style="left:531.0px;top:710.4px;font-size:23px;font-weight:400;color:#1f2937;transform:scaleX(0.9029);transform-origin:0 0;">전남 완도군 완도읍 장좌리 양식장</div>
<div class="t" style="left:532.0px;top:1790.0px;font-size:25px;font-weight:400;color:#1f2937;letter-spacing:0.19px;">2025-08-01 00:00:00</div>
<div class="t" style="left:1017.4px;top:1790.0px;font-size:25px;font-weight:400;color:#1f2937;letter-spacing:0.18px;">2025-12-06 00:00:00</div>
<div class="t" style="left:1502.3px;top:1790.0px;font-size:25px;font-weight:400;color:#1f2937;letter-spacing:0.05px;">2025-09-22 23:19:51</div>
<div class="t" style="left:1987.6px;top:1790.0px;font-size:25px;font-weight:400;color:#1f2937;letter-spacing:0.08px;">2025-10-08 10:24:48</div>
<div class="t" style="left:896.6px;top:1887.4px;font-size:23px;font-weight:400;color:#374151;transform:scaleX(0.9182);transform-origin:0 0;-webkit-text-stroke:0.4px #374151;">센서 데이터 보기</div>
<div class="t" style="left:1889.8px;top:1887.4px;font-size:23px;font-weight:400;color:#374151;transform:scaleX(0.9405);transform-origin:0 0;-webkit-text-stroke:0.4px #374151;">비디오 보기</div>
<div class="t" style="left:2132.1px;top:2015.0px;font-size:23px;font-weight:400;color:#374151;transform:scaleX(0.9524);transform-origin:0 0;">목록</div>
<div class="t" style="left:2242.0px;top:2015.0px;font-size:23px;font-weight:400;color:#374151;transform:scaleX(0.9537);transform-origin:0 0;">수정</div>
<div class="t" style="left:2349.1px;top:2015.0px;font-size:23px;font-weight:400;color:#ffffff;transform:scaleX(0.9683);transform-origin:0 0;-webkit-text-stroke:0.4px #ffffff;">삭제</div>
<div class="t" style="left:464.8px;top:2180.6px;font-size:25px;font-weight:400;color:#4b5563;letter-spacing:-0.57px;">© 2025 NOAH SYSTEM. All rights reserved.</div>
<div class="t" style="left:1981.8px;top:2179.4px;font-size:24px;font-weight:400;color:#4b5563;transform:scaleX(0.8711);transform-origin:0 0;">개인정보처리방침</div>
<div class="t" style="left:2219.5px;top:2179.4px;font-size:24px;font-weight:400;color:#4b5563;transform:scaleX(0.8585);transform-origin:0 0;">이용약관</div>
<div class="t" style="left:2373.5px;top:2179.4px;font-size:24px;font-weight:400;color:#4b5563;transform:scaleX(0.9000);transform-origin:0 0;">문의하기</div>
<div class="t" style="left:551.6px;top:933.9px;font-size:29px;font-weight:700;color:#000000;letter-spacing:-0.97px;">34°18&#x27;41.8&quot;N 126°45&#x27;18.0&quot;E</div>
<div class="t" style="left:984.0px;top:986.5px;font-size:23px;font-weight:400;color:#1a73e8;transform:scaleX(0.9460);transform-origin:0 0;">길찾기</div>
<div class="t" style="left:550.8px;top:1047.8px;font-size:24px;font-weight:400;color:#1a73e8;transform:scaleX(0.9008);transform-origin:0 0;">큰 지도 보기</div>
</body></html>
